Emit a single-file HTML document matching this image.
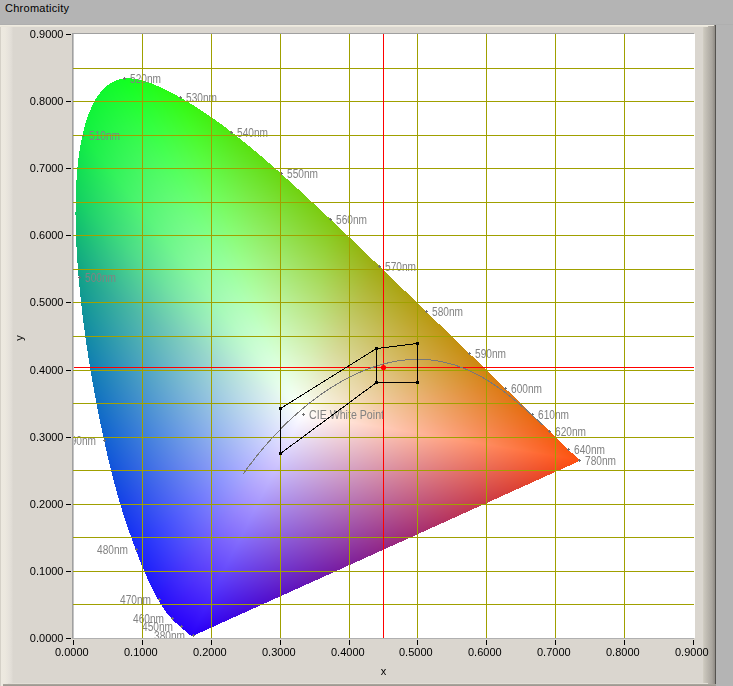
<!DOCTYPE html>
<html><head><meta charset="utf-8">
<style>
html,body{margin:0;padding:0;width:733px;height:686px;overflow:hidden;background:#b4b4b4;}
body{position:relative;font-family:"Liberation Sans",sans-serif;}
#tline{position:absolute;left:0;top:24px;width:733px;height:1px;background:#afafaf;}
#title{position:absolute;left:5px;top:0;font-size:11px;line-height:16px;color:#000;letter-spacing:0.27px;}
#panel{position:absolute;left:0;top:25px;width:716px;height:661px;background:#dad6cf;}
#ltop{position:absolute;left:0;top:0;width:714px;height:1px;background:#efebe0;}#ltop2{position:absolute;left:0;top:1px;width:708px;height:1px;background:#e9e5da;}
#lstrip{position:absolute;left:0;top:2px;width:13px;height:659px;background:linear-gradient(to right,#d5d1c8 0,#d5d1c8 1px,#ede9e0 1px,#ece8df 5px,#e6e2db 9px,#dfdbd4 12px,#dad6cf 13px);}
#rstrip{position:absolute;left:703px;top:0;width:13px;height:661px;background:linear-gradient(to right,#d3cfc4 0,#cbc7bd 1px,#a9a59e 9px,#8e8a84 12px,#55534f 12px,#55534f 13px);}
#bhl{position:absolute;left:8px;top:658px;width:700px;height:1px;background:#e2ded6;}
#bstrip{position:absolute;left:3px;top:659px;width:713px;height:2px;background:linear-gradient(to bottom,#aca8a0,#9a968e);}
#plot{position:absolute;left:74px;top:34px;width:621px;height:604px;background:#fff;}
canvas{position:absolute;left:0;top:0;}
svg{position:absolute;left:0;top:0;}
.wl text{font-size:12px;fill:#828282;}
.ax text{font-size:11px;fill:#000;}
</style></head><body>
<div id="tline"></div><div id="title">Chromaticity</div>
<div id="panel"><div id="rstrip"></div><div id="ltop"></div><div id="ltop2"></div><div id="lstrip"></div><div id="bhl"></div><div id="bstrip"></div></div>
<div id="plot"></div>
<svg id="fb" width="733" height="686" style="position:absolute;left:0;top:0"><defs><linearGradient id="g0" gradientUnits="userSpaceOnUse" x1="302.6" y1="414.3" x2="252.1" y2="647.5"><stop offset="0" stop-color="#fff"/><stop offset="1" stop-color="#2800fa"/></linearGradient><linearGradient id="g1" gradientUnits="userSpaceOnUse" x1="302.6" y1="414.3" x2="219.8" y2="644.4"><stop offset="0" stop-color="#fff"/><stop offset="1" stop-color="#2800fa"/></linearGradient><linearGradient id="g2" gradientUnits="userSpaceOnUse" x1="302.6" y1="414.3" x2="357.6" y2="580.1"><stop offset="0" stop-color="#fff"/><stop offset="1" stop-color="#2800fa"/></linearGradient><linearGradient id="g3" gradientUnits="userSpaceOnUse" x1="302.6" y1="414.3" x2="366.4" y2="557.1"><stop offset="0" stop-color="#fff"/><stop offset="1" stop-color="#2800fa"/></linearGradient><linearGradient id="g4" gradientUnits="userSpaceOnUse" x1="302.6" y1="414.3" x2="326.7" y2="619.0"><stop offset="0" stop-color="#fff"/><stop offset="1" stop-color="#2800fa"/></linearGradient><linearGradient id="g5" gradientUnits="userSpaceOnUse" x1="302.6" y1="414.3" x2="251.0" y2="647.6"><stop offset="0" stop-color="#fff"/><stop offset="1" stop-color="#2800fa"/></linearGradient><linearGradient id="g6" gradientUnits="userSpaceOnUse" x1="302.6" y1="414.3" x2="296.5" y2="637.5"><stop offset="0" stop-color="#fff"/><stop offset="1" stop-color="#2800fa"/></linearGradient><linearGradient id="g7" gradientUnits="userSpaceOnUse" x1="302.6" y1="414.3" x2="367.7" y2="551.9"><stop offset="0" stop-color="#fff"/><stop offset="1" stop-color="#2800fa"/></linearGradient><linearGradient id="g8" gradientUnits="userSpaceOnUse" x1="302.6" y1="414.3" x2="370.7" y2="521.6"><stop offset="0" stop-color="#fff"/><stop offset="1" stop-color="#2800fa"/></linearGradient><linearGradient id="g9" gradientUnits="userSpaceOnUse" x1="302.6" y1="414.3" x2="366.3" y2="557.6"><stop offset="0" stop-color="#fff"/><stop offset="1" stop-color="#2800fa"/></linearGradient><linearGradient id="g10" gradientUnits="userSpaceOnUse" x1="302.6" y1="414.3" x2="336.9" y2="609.4"><stop offset="0" stop-color="#fff"/><stop offset="1" stop-color="#2800fa"/></linearGradient><linearGradient id="g11" gradientUnits="userSpaceOnUse" x1="302.6" y1="414.3" x2="310.1" y2="630.7"><stop offset="0" stop-color="#fff"/><stop offset="1" stop-color="#2800fa"/></linearGradient><linearGradient id="g12" gradientUnits="userSpaceOnUse" x1="302.6" y1="414.3" x2="293.3" y2="639.0"><stop offset="0" stop-color="#fff"/><stop offset="1" stop-color="#2800fa"/></linearGradient><linearGradient id="g13" gradientUnits="userSpaceOnUse" x1="302.6" y1="414.3" x2="281.2" y2="643.1"><stop offset="0" stop-color="#fff"/><stop offset="1" stop-color="#2800fa"/></linearGradient><linearGradient id="g14" gradientUnits="userSpaceOnUse" x1="302.6" y1="414.3" x2="302.0" y2="635.1"><stop offset="0" stop-color="#fff"/><stop offset="1" stop-color="#2800fa"/></linearGradient><linearGradient id="g15" gradientUnits="userSpaceOnUse" x1="302.6" y1="414.3" x2="306.4" y2="632.8"><stop offset="0" stop-color="#fff"/><stop offset="1" stop-color="#2800fa"/></linearGradient><linearGradient id="g16" gradientUnits="userSpaceOnUse" x1="302.6" y1="414.3" x2="282.1" y2="642.9"><stop offset="0" stop-color="#fff"/><stop offset="1" stop-color="#2800fa"/></linearGradient><linearGradient id="g17" gradientUnits="userSpaceOnUse" x1="302.6" y1="414.3" x2="259.2" y2="647.4"><stop offset="0" stop-color="#fff"/><stop offset="1" stop-color="#2800fa"/></linearGradient><linearGradient id="g18" gradientUnits="userSpaceOnUse" x1="302.6" y1="414.3" x2="223.8" y2="645.8"><stop offset="0" stop-color="#fff"/><stop offset="1" stop-color="#2800fa"/></linearGradient><linearGradient id="g19" gradientUnits="userSpaceOnUse" x1="302.6" y1="414.3" x2="196.7" y2="637.2"><stop offset="0" stop-color="#fff"/><stop offset="1" stop-color="#2800fa"/></linearGradient><linearGradient id="g20" gradientUnits="userSpaceOnUse" x1="302.6" y1="414.3" x2="184.7" y2="631.1"><stop offset="0" stop-color="#fff"/><stop offset="1" stop-color="#2800fa"/></linearGradient><linearGradient id="g21" gradientUnits="userSpaceOnUse" x1="302.6" y1="414.3" x2="173.2" y2="623.5"><stop offset="0" stop-color="#fff"/><stop offset="1" stop-color="#2800fa"/></linearGradient><linearGradient id="g22" gradientUnits="userSpaceOnUse" x1="302.6" y1="414.3" x2="162.3" y2="614.5"><stop offset="0" stop-color="#fff"/><stop offset="1" stop-color="#2800fa"/></linearGradient><linearGradient id="g23" gradientUnits="userSpaceOnUse" x1="302.6" y1="414.3" x2="155.9" y2="608.0"><stop offset="0" stop-color="#fff"/><stop offset="1" stop-color="#2800fa"/></linearGradient><linearGradient id="g24" gradientUnits="userSpaceOnUse" x1="302.6" y1="414.3" x2="153.5" y2="605.4"><stop offset="0" stop-color="#fff"/><stop offset="1" stop-color="#2800fa"/></linearGradient><linearGradient id="g25" gradientUnits="userSpaceOnUse" x1="302.6" y1="414.3" x2="152.9" y2="604.7"><stop offset="0" stop-color="#fff"/><stop offset="1" stop-color="#2800fa"/></linearGradient><linearGradient id="g26" gradientUnits="userSpaceOnUse" x1="302.6" y1="414.3" x2="150.1" y2="601.4"><stop offset="0" stop-color="#fff"/><stop offset="1" stop-color="#2800fa"/></linearGradient><linearGradient id="g27" gradientUnits="userSpaceOnUse" x1="302.6" y1="414.3" x2="145.2" y2="595.0"><stop offset="0" stop-color="#fff"/><stop offset="1" stop-color="#2800fa"/></linearGradient><linearGradient id="g28" gradientUnits="userSpaceOnUse" x1="302.6" y1="414.3" x2="142.1" y2="590.5"><stop offset="0" stop-color="#fff"/><stop offset="1" stop-color="#2800fa"/></linearGradient><linearGradient id="g29" gradientUnits="userSpaceOnUse" x1="302.6" y1="414.3" x2="142.7" y2="591.4"><stop offset="0" stop-color="#fff"/><stop offset="1" stop-color="#2800fa"/></linearGradient><linearGradient id="g30" gradientUnits="userSpaceOnUse" x1="302.6" y1="414.3" x2="144.9" y2="594.5"><stop offset="0" stop-color="#fff"/><stop offset="1" stop-color="#2800fa"/></linearGradient><linearGradient id="g31" gradientUnits="userSpaceOnUse" x1="302.6" y1="414.3" x2="146.1" y2="596.2"><stop offset="0" stop-color="#fff"/><stop offset="1" stop-color="#2801fa"/></linearGradient><linearGradient id="g32" gradientUnits="userSpaceOnUse" x1="302.6" y1="414.3" x2="146.6" y2="596.7"><stop offset="0" stop-color="#fff"/><stop offset="1" stop-color="#2801fa"/></linearGradient><linearGradient id="g33" gradientUnits="userSpaceOnUse" x1="302.6" y1="414.3" x2="146.6" y2="596.8"><stop offset="0" stop-color="#fff"/><stop offset="1" stop-color="#2801fa"/></linearGradient><linearGradient id="g34" gradientUnits="userSpaceOnUse" x1="302.6" y1="414.3" x2="146.9" y2="597.1"><stop offset="0" stop-color="#fff"/><stop offset="1" stop-color="#2802fa"/></linearGradient><linearGradient id="g35" gradientUnits="userSpaceOnUse" x1="302.6" y1="414.3" x2="146.9" y2="597.1"><stop offset="0" stop-color="#fff"/><stop offset="1" stop-color="#2802fa"/></linearGradient><linearGradient id="g36" gradientUnits="userSpaceOnUse" x1="302.6" y1="414.3" x2="145.4" y2="595.3"><stop offset="0" stop-color="#fff"/><stop offset="1" stop-color="#2803fa"/></linearGradient><linearGradient id="g37" gradientUnits="userSpaceOnUse" x1="302.6" y1="414.3" x2="142.7" y2="591.8"><stop offset="0" stop-color="#fff"/><stop offset="1" stop-color="#2803fa"/></linearGradient><linearGradient id="g38" gradientUnits="userSpaceOnUse" x1="302.6" y1="414.3" x2="139.2" y2="586.9"><stop offset="0" stop-color="#fff"/><stop offset="1" stop-color="#2803fa"/></linearGradient><linearGradient id="g39" gradientUnits="userSpaceOnUse" x1="302.6" y1="414.3" x2="135.1" y2="580.7"><stop offset="0" stop-color="#fff"/><stop offset="1" stop-color="#2804fa"/></linearGradient><linearGradient id="g40" gradientUnits="userSpaceOnUse" x1="302.6" y1="414.3" x2="130.8" y2="573.3"><stop offset="0" stop-color="#fff"/><stop offset="1" stop-color="#2805fa"/></linearGradient><linearGradient id="g41" gradientUnits="userSpaceOnUse" x1="302.6" y1="414.3" x2="125.7" y2="563.1"><stop offset="0" stop-color="#fff"/><stop offset="1" stop-color="#2707fa"/></linearGradient><linearGradient id="g42" gradientUnits="userSpaceOnUse" x1="302.6" y1="414.3" x2="120.8" y2="550.3"><stop offset="0" stop-color="#fff"/><stop offset="1" stop-color="#2609fa"/></linearGradient><linearGradient id="g43" gradientUnits="userSpaceOnUse" x1="302.6" y1="414.3" x2="117.5" y2="538.7"><stop offset="0" stop-color="#fff"/><stop offset="1" stop-color="#250bfa"/></linearGradient><linearGradient id="g44" gradientUnits="userSpaceOnUse" x1="302.6" y1="414.3" x2="115.4" y2="528.6"><stop offset="0" stop-color="#fff"/><stop offset="1" stop-color="#240dfa"/></linearGradient><linearGradient id="g45" gradientUnits="userSpaceOnUse" x1="302.6" y1="414.3" x2="114.0" y2="518.9"><stop offset="0" stop-color="#fff"/><stop offset="1" stop-color="#2311fa"/></linearGradient><linearGradient id="g46" gradientUnits="userSpaceOnUse" x1="302.6" y1="414.3" x2="113.1" y2="509.8"><stop offset="0" stop-color="#fff"/><stop offset="1" stop-color="#2016fa"/></linearGradient><linearGradient id="g47" gradientUnits="userSpaceOnUse" x1="302.6" y1="414.3" x2="112.6" y2="501.4"><stop offset="0" stop-color="#fff"/><stop offset="1" stop-color="#1e1bfa"/></linearGradient><linearGradient id="g48" gradientUnits="userSpaceOnUse" x1="302.6" y1="414.3" x2="112.4" y2="493.8"><stop offset="0" stop-color="#fff"/><stop offset="1" stop-color="#1c20fa"/></linearGradient><linearGradient id="g49" gradientUnits="userSpaceOnUse" x1="302.6" y1="414.3" x2="112.3" y2="488.3"><stop offset="0" stop-color="#fff"/><stop offset="1" stop-color="#1925fa"/></linearGradient><linearGradient id="g50" gradientUnits="userSpaceOnUse" x1="302.6" y1="414.3" x2="112.1" y2="484.0"><stop offset="0" stop-color="#fff"/><stop offset="1" stop-color="#172df6"/></linearGradient><linearGradient id="g51" gradientUnits="userSpaceOnUse" x1="302.6" y1="414.3" x2="111.7" y2="478.6"><stop offset="0" stop-color="#fff"/><stop offset="1" stop-color="#1636ef"/></linearGradient><linearGradient id="g52" gradientUnits="userSpaceOnUse" x1="302.6" y1="414.3" x2="111.0" y2="471.6"><stop offset="0" stop-color="#fff"/><stop offset="1" stop-color="#1441e8"/></linearGradient><linearGradient id="g53" gradientUnits="userSpaceOnUse" x1="302.6" y1="414.3" x2="109.9" y2="464.7"><stop offset="0" stop-color="#fff"/><stop offset="1" stop-color="#124ddf"/></linearGradient><linearGradient id="g54" gradientUnits="userSpaceOnUse" x1="302.6" y1="414.3" x2="108.8" y2="459.4"><stop offset="0" stop-color="#fff"/><stop offset="1" stop-color="#115ad6"/></linearGradient><linearGradient id="g55" gradientUnits="userSpaceOnUse" x1="302.6" y1="414.3" x2="107.5" y2="455.3"><stop offset="0" stop-color="#fff"/><stop offset="1" stop-color="#1066cb"/></linearGradient><linearGradient id="g56" gradientUnits="userSpaceOnUse" x1="302.6" y1="414.3" x2="105.6" y2="451.0"><stop offset="0" stop-color="#fff"/><stop offset="1" stop-color="#1073be"/></linearGradient><linearGradient id="g57" gradientUnits="userSpaceOnUse" x1="302.6" y1="414.3" x2="103.0" y2="446.3"><stop offset="0" stop-color="#fff"/><stop offset="1" stop-color="#1080af"/></linearGradient><linearGradient id="g58" gradientUnits="userSpaceOnUse" x1="302.6" y1="414.3" x2="99.5" y2="441.3"><stop offset="0" stop-color="#fff"/><stop offset="1" stop-color="#108da0"/></linearGradient><linearGradient id="g59" gradientUnits="userSpaceOnUse" x1="302.6" y1="414.3" x2="94.9" y2="435.6"><stop offset="0" stop-color="#fff"/><stop offset="1" stop-color="#109a90"/></linearGradient><linearGradient id="g60" gradientUnits="userSpaceOnUse" x1="302.6" y1="414.3" x2="89.2" y2="429.1"><stop offset="0" stop-color="#fff"/><stop offset="1" stop-color="#10aa80"/></linearGradient><linearGradient id="g61" gradientUnits="userSpaceOnUse" x1="302.6" y1="414.3" x2="81.2" y2="420.4"><stop offset="0" stop-color="#fff"/><stop offset="1" stop-color="#10bd70"/></linearGradient><linearGradient id="g62" gradientUnits="userSpaceOnUse" x1="302.6" y1="414.3" x2="70.8" y2="408.7"><stop offset="0" stop-color="#fff"/><stop offset="1" stop-color="#10ce61"/></linearGradient><linearGradient id="g63" gradientUnits="userSpaceOnUse" x1="302.6" y1="414.3" x2="58.1" y2="393.0"><stop offset="0" stop-color="#fff"/><stop offset="1" stop-color="#10dd53"/></linearGradient><linearGradient id="g64" gradientUnits="userSpaceOnUse" x1="302.6" y1="414.3" x2="41.9" y2="369.1"><stop offset="0" stop-color="#fff"/><stop offset="1" stop-color="#10ea46"/></linearGradient><linearGradient id="g65" gradientUnits="userSpaceOnUse" x1="302.6" y1="414.3" x2="24.6" y2="333.1"><stop offset="0" stop-color="#fff"/><stop offset="1" stop-color="#10f23d"/></linearGradient><linearGradient id="g66" gradientUnits="userSpaceOnUse" x1="302.6" y1="414.3" x2="11.9" y2="278.8"><stop offset="0" stop-color="#fff"/><stop offset="1" stop-color="#10f436"/></linearGradient><linearGradient id="g67" gradientUnits="userSpaceOnUse" x1="302.6" y1="414.3" x2="21.1" y2="194.7"><stop offset="0" stop-color="#fff"/><stop offset="1" stop-color="#10f830"/></linearGradient><linearGradient id="g68" gradientUnits="userSpaceOnUse" x1="302.6" y1="414.3" x2="84.5" y2="101.9"><stop offset="0" stop-color="#fff"/><stop offset="1" stop-color="#10fa2a"/></linearGradient><linearGradient id="g69" gradientUnits="userSpaceOnUse" x1="302.6" y1="414.3" x2="200.8" y2="56.6"><stop offset="0" stop-color="#fff"/><stop offset="1" stop-color="#10fe23"/></linearGradient><linearGradient id="g70" gradientUnits="userSpaceOnUse" x1="302.6" y1="414.3" x2="313.2" y2="84.5"><stop offset="0" stop-color="#fff"/><stop offset="1" stop-color="#13fe1e"/></linearGradient><linearGradient id="g71" gradientUnits="userSpaceOnUse" x1="302.6" y1="414.3" x2="371.5" y2="137.7"><stop offset="0" stop-color="#fff"/><stop offset="1" stop-color="#1afe1b"/></linearGradient><linearGradient id="g72" gradientUnits="userSpaceOnUse" x1="302.6" y1="414.3" x2="393.7" y2="176.2"><stop offset="0" stop-color="#fff"/><stop offset="1" stop-color="#20fc18"/></linearGradient><linearGradient id="g73" gradientUnits="userSpaceOnUse" x1="302.6" y1="414.3" x2="403.3" y2="203.0"><stop offset="0" stop-color="#fff"/><stop offset="1" stop-color="#26fc15"/></linearGradient><linearGradient id="g74" gradientUnits="userSpaceOnUse" x1="302.6" y1="414.3" x2="407.5" y2="220.7"><stop offset="0" stop-color="#fff"/><stop offset="1" stop-color="#2dfa12"/></linearGradient><linearGradient id="g75" gradientUnits="userSpaceOnUse" x1="302.6" y1="414.3" x2="409.5" y2="232.1"><stop offset="0" stop-color="#fff"/><stop offset="1" stop-color="#33f810"/></linearGradient><linearGradient id="g76" gradientUnits="userSpaceOnUse" x1="302.6" y1="414.3" x2="410.9" y2="242.3"><stop offset="0" stop-color="#fff"/><stop offset="1" stop-color="#3af410"/></linearGradient><linearGradient id="g77" gradientUnits="userSpaceOnUse" x1="302.6" y1="414.3" x2="411.8" y2="252.4"><stop offset="0" stop-color="#fff"/><stop offset="1" stop-color="#40f010"/></linearGradient><linearGradient id="g78" gradientUnits="userSpaceOnUse" x1="302.6" y1="414.3" x2="412.3" y2="260.9"><stop offset="0" stop-color="#fff"/><stop offset="1" stop-color="#46ec10"/></linearGradient><linearGradient id="g79" gradientUnits="userSpaceOnUse" x1="302.6" y1="414.3" x2="412.5" y2="268.2"><stop offset="0" stop-color="#fff"/><stop offset="1" stop-color="#4de810"/></linearGradient><linearGradient id="g80" gradientUnits="userSpaceOnUse" x1="302.6" y1="414.3" x2="412.6" y2="274.4"><stop offset="0" stop-color="#fff"/><stop offset="1" stop-color="#52e410"/></linearGradient><linearGradient id="g81" gradientUnits="userSpaceOnUse" x1="302.6" y1="414.3" x2="412.6" y2="279.6"><stop offset="0" stop-color="#fff"/><stop offset="1" stop-color="#57e210"/></linearGradient><linearGradient id="g82" gradientUnits="userSpaceOnUse" x1="302.6" y1="414.3" x2="412.6" y2="283.9"><stop offset="0" stop-color="#fff"/><stop offset="1" stop-color="#5cde10"/></linearGradient><linearGradient id="g83" gradientUnits="userSpaceOnUse" x1="302.6" y1="414.3" x2="412.6" y2="287.4"><stop offset="0" stop-color="#fff"/><stop offset="1" stop-color="#61dc10"/></linearGradient><linearGradient id="g84" gradientUnits="userSpaceOnUse" x1="302.6" y1="414.3" x2="412.6" y2="290.1"><stop offset="0" stop-color="#fff"/><stop offset="1" stop-color="#66d810"/></linearGradient><linearGradient id="g85" gradientUnits="userSpaceOnUse" x1="302.6" y1="414.3" x2="412.6" y2="292.3"><stop offset="0" stop-color="#fff"/><stop offset="1" stop-color="#6ad610"/></linearGradient><linearGradient id="g86" gradientUnits="userSpaceOnUse" x1="302.6" y1="414.3" x2="412.7" y2="294.0"><stop offset="0" stop-color="#fff"/><stop offset="1" stop-color="#6fd210"/></linearGradient><linearGradient id="g87" gradientUnits="userSpaceOnUse" x1="302.6" y1="414.3" x2="412.8" y2="295.4"><stop offset="0" stop-color="#fff"/><stop offset="1" stop-color="#74d010"/></linearGradient><linearGradient id="g88" gradientUnits="userSpaceOnUse" x1="302.6" y1="414.3" x2="412.9" y2="296.5"><stop offset="0" stop-color="#fff"/><stop offset="1" stop-color="#79cc10"/></linearGradient><linearGradient id="g89" gradientUnits="userSpaceOnUse" x1="302.6" y1="414.3" x2="413.1" y2="297.3"><stop offset="0" stop-color="#fff"/><stop offset="1" stop-color="#7eca10"/></linearGradient><linearGradient id="g90" gradientUnits="userSpaceOnUse" x1="302.6" y1="414.3" x2="413.2" y2="297.8"><stop offset="0" stop-color="#fff"/><stop offset="1" stop-color="#83c510"/></linearGradient><linearGradient id="g91" gradientUnits="userSpaceOnUse" x1="302.6" y1="414.3" x2="413.3" y2="298.3"><stop offset="0" stop-color="#fff"/><stop offset="1" stop-color="#8abf10"/></linearGradient><linearGradient id="g92" gradientUnits="userSpaceOnUse" x1="302.6" y1="414.3" x2="413.4" y2="298.7"><stop offset="0" stop-color="#fff"/><stop offset="1" stop-color="#90b910"/></linearGradient><linearGradient id="g93" gradientUnits="userSpaceOnUse" x1="302.6" y1="414.3" x2="413.5" y2="299.0"><stop offset="0" stop-color="#fff"/><stop offset="1" stop-color="#96b310"/></linearGradient><linearGradient id="g94" gradientUnits="userSpaceOnUse" x1="302.6" y1="414.3" x2="413.6" y2="299.2"><stop offset="0" stop-color="#fff"/><stop offset="1" stop-color="#9dad10"/></linearGradient><linearGradient id="g95" gradientUnits="userSpaceOnUse" x1="302.6" y1="414.3" x2="413.7" y2="299.4"><stop offset="0" stop-color="#fff"/><stop offset="1" stop-color="#a2a810"/></linearGradient><linearGradient id="g96" gradientUnits="userSpaceOnUse" x1="302.6" y1="414.3" x2="413.8" y2="299.6"><stop offset="0" stop-color="#fff"/><stop offset="1" stop-color="#a7a610"/></linearGradient><linearGradient id="g97" gradientUnits="userSpaceOnUse" x1="302.6" y1="414.3" x2="413.9" y2="299.6"><stop offset="0" stop-color="#fff"/><stop offset="1" stop-color="#aba210"/></linearGradient><linearGradient id="g98" gradientUnits="userSpaceOnUse" x1="302.6" y1="414.3" x2="414.0" y2="299.7"><stop offset="0" stop-color="#fff"/><stop offset="1" stop-color="#afa010"/></linearGradient><linearGradient id="g99" gradientUnits="userSpaceOnUse" x1="302.6" y1="414.3" x2="414.0" y2="299.7"><stop offset="0" stop-color="#fff"/><stop offset="1" stop-color="#b49c10"/></linearGradient><linearGradient id="g100" gradientUnits="userSpaceOnUse" x1="302.6" y1="414.3" x2="413.9" y2="299.6"><stop offset="0" stop-color="#fff"/><stop offset="1" stop-color="#b89a10"/></linearGradient><linearGradient id="g101" gradientUnits="userSpaceOnUse" x1="302.6" y1="414.3" x2="413.8" y2="299.6"><stop offset="0" stop-color="#fff"/><stop offset="1" stop-color="#bb9610"/></linearGradient><linearGradient id="g102" gradientUnits="userSpaceOnUse" x1="302.6" y1="414.3" x2="413.8" y2="299.6"><stop offset="0" stop-color="#fff"/><stop offset="1" stop-color="#bf9410"/></linearGradient><linearGradient id="g103" gradientUnits="userSpaceOnUse" x1="302.6" y1="414.3" x2="413.7" y2="299.6"><stop offset="0" stop-color="#fff"/><stop offset="1" stop-color="#c39010"/></linearGradient><linearGradient id="g104" gradientUnits="userSpaceOnUse" x1="302.6" y1="414.3" x2="413.8" y2="299.6"><stop offset="0" stop-color="#fff"/><stop offset="1" stop-color="#c68e10"/></linearGradient><linearGradient id="g105" gradientUnits="userSpaceOnUse" x1="302.6" y1="414.3" x2="414.1" y2="299.7"><stop offset="0" stop-color="#fff"/><stop offset="1" stop-color="#ca8a10"/></linearGradient><linearGradient id="g106" gradientUnits="userSpaceOnUse" x1="302.6" y1="414.3" x2="414.2" y2="299.7"><stop offset="0" stop-color="#fff"/><stop offset="1" stop-color="#ce8610"/></linearGradient><linearGradient id="g107" gradientUnits="userSpaceOnUse" x1="302.6" y1="414.3" x2="414.0" y2="299.7"><stop offset="0" stop-color="#fff"/><stop offset="1" stop-color="#d28210"/></linearGradient><linearGradient id="g108" gradientUnits="userSpaceOnUse" x1="302.6" y1="414.3" x2="413.9" y2="299.6"><stop offset="0" stop-color="#fff"/><stop offset="1" stop-color="#d67e10"/></linearGradient><linearGradient id="g109" gradientUnits="userSpaceOnUse" x1="302.6" y1="414.3" x2="413.8" y2="299.6"><stop offset="0" stop-color="#fff"/><stop offset="1" stop-color="#da7a10"/></linearGradient><linearGradient id="g110" gradientUnits="userSpaceOnUse" x1="302.6" y1="414.3" x2="413.9" y2="299.6"><stop offset="0" stop-color="#fff"/><stop offset="1" stop-color="#dd7710"/></linearGradient><linearGradient id="g111" gradientUnits="userSpaceOnUse" x1="302.6" y1="414.3" x2="413.8" y2="299.6"><stop offset="0" stop-color="#fff"/><stop offset="1" stop-color="#e07410"/></linearGradient><linearGradient id="g112" gradientUnits="userSpaceOnUse" x1="302.6" y1="414.3" x2="413.6" y2="299.6"><stop offset="0" stop-color="#fff"/><stop offset="1" stop-color="#e27110"/></linearGradient><linearGradient id="g113" gradientUnits="userSpaceOnUse" x1="302.6" y1="414.3" x2="413.4" y2="299.6"><stop offset="0" stop-color="#fff"/><stop offset="1" stop-color="#e46e10"/></linearGradient><linearGradient id="g114" gradientUnits="userSpaceOnUse" x1="302.6" y1="414.3" x2="413.4" y2="299.6"><stop offset="0" stop-color="#fff"/><stop offset="1" stop-color="#e76b10"/></linearGradient><linearGradient id="g115" gradientUnits="userSpaceOnUse" x1="302.6" y1="414.3" x2="413.8" y2="299.6"><stop offset="0" stop-color="#fff"/><stop offset="1" stop-color="#e96910"/></linearGradient><linearGradient id="g116" gradientUnits="userSpaceOnUse" x1="302.6" y1="414.3" x2="414.1" y2="299.6"><stop offset="0" stop-color="#fff"/><stop offset="1" stop-color="#ea6710"/></linearGradient><linearGradient id="g117" gradientUnits="userSpaceOnUse" x1="302.6" y1="414.3" x2="414.2" y2="299.6"><stop offset="0" stop-color="#fff"/><stop offset="1" stop-color="#ec6510"/></linearGradient><linearGradient id="g118" gradientUnits="userSpaceOnUse" x1="302.6" y1="414.3" x2="414.2" y2="299.6"><stop offset="0" stop-color="#fff"/><stop offset="1" stop-color="#ee6310"/></linearGradient><linearGradient id="g119" gradientUnits="userSpaceOnUse" x1="302.6" y1="414.3" x2="414.1" y2="299.6"><stop offset="0" stop-color="#fff"/><stop offset="1" stop-color="#ef6110"/></linearGradient><linearGradient id="g120" gradientUnits="userSpaceOnUse" x1="302.6" y1="414.3" x2="413.7" y2="299.6"><stop offset="0" stop-color="#fff"/><stop offset="1" stop-color="#f05f10"/></linearGradient><linearGradient id="g121" gradientUnits="userSpaceOnUse" x1="302.6" y1="414.3" x2="413.4" y2="299.7"><stop offset="0" stop-color="#fff"/><stop offset="1" stop-color="#f25e10"/></linearGradient><linearGradient id="g122" gradientUnits="userSpaceOnUse" x1="302.6" y1="414.3" x2="413.5" y2="299.7"><stop offset="0" stop-color="#fff"/><stop offset="1" stop-color="#f25d10"/></linearGradient><linearGradient id="g123" gradientUnits="userSpaceOnUse" x1="302.6" y1="414.3" x2="413.7" y2="299.6"><stop offset="0" stop-color="#fff"/><stop offset="1" stop-color="#f45c10"/></linearGradient><linearGradient id="g124" gradientUnits="userSpaceOnUse" x1="302.6" y1="414.3" x2="413.9" y2="299.6"><stop offset="0" stop-color="#fff"/><stop offset="1" stop-color="#f45b10"/></linearGradient><linearGradient id="g125" gradientUnits="userSpaceOnUse" x1="302.6" y1="414.3" x2="414.0" y2="299.6"><stop offset="0" stop-color="#fff"/><stop offset="1" stop-color="#f65a10"/></linearGradient><linearGradient id="g126" gradientUnits="userSpaceOnUse" x1="302.6" y1="414.3" x2="414.1" y2="299.6"><stop offset="0" stop-color="#fff"/><stop offset="1" stop-color="#f65910"/></linearGradient><linearGradient id="g127" gradientUnits="userSpaceOnUse" x1="302.6" y1="414.3" x2="414.2" y2="299.6"><stop offset="0" stop-color="#fff"/><stop offset="1" stop-color="#f85810"/></linearGradient><linearGradient id="g128" gradientUnits="userSpaceOnUse" x1="302.6" y1="414.3" x2="414.2" y2="299.6"><stop offset="0" stop-color="#fff"/><stop offset="1" stop-color="#f85710"/></linearGradient><linearGradient id="g129" gradientUnits="userSpaceOnUse" x1="302.6" y1="414.3" x2="414.2" y2="299.6"><stop offset="0" stop-color="#fff"/><stop offset="1" stop-color="#fa5610"/></linearGradient><linearGradient id="g130" gradientUnits="userSpaceOnUse" x1="302.6" y1="414.3" x2="414.1" y2="299.6"><stop offset="0" stop-color="#fff"/><stop offset="1" stop-color="#fa5510"/></linearGradient><linearGradient id="g131" gradientUnits="userSpaceOnUse" x1="302.6" y1="414.3" x2="414.0" y2="299.6"><stop offset="0" stop-color="#fff"/><stop offset="1" stop-color="#fa5510"/></linearGradient><linearGradient id="g132" gradientUnits="userSpaceOnUse" x1="302.6" y1="414.3" x2="413.8" y2="299.6"><stop offset="0" stop-color="#fff"/><stop offset="1" stop-color="#fa5510"/></linearGradient><linearGradient id="g133" gradientUnits="userSpaceOnUse" x1="302.6" y1="414.3" x2="413.5" y2="299.7"><stop offset="0" stop-color="#fff"/><stop offset="1" stop-color="#fb5410"/></linearGradient><linearGradient id="g134" gradientUnits="userSpaceOnUse" x1="302.6" y1="414.3" x2="413.5" y2="299.7"><stop offset="0" stop-color="#fff"/><stop offset="1" stop-color="#fb5410"/></linearGradient><linearGradient id="g135" gradientUnits="userSpaceOnUse" x1="302.6" y1="414.3" x2="414.4" y2="299.5"><stop offset="0" stop-color="#fff"/><stop offset="1" stop-color="#fb5410"/></linearGradient><linearGradient id="g136" gradientUnits="userSpaceOnUse" x1="302.6" y1="414.3" x2="414.4" y2="299.5"><stop offset="0" stop-color="#fff"/><stop offset="1" stop-color="#fb5410"/></linearGradient><linearGradient id="g137" gradientUnits="userSpaceOnUse" x1="302.6" y1="414.3" x2="414.4" y2="299.5"><stop offset="0" stop-color="#fff"/><stop offset="1" stop-color="#fb5410"/></linearGradient><linearGradient id="g138" gradientUnits="userSpaceOnUse" x1="302.6" y1="414.3" x2="414.4" y2="299.5"><stop offset="0" stop-color="#fff"/><stop offset="1" stop-color="#fb5410"/></linearGradient><linearGradient id="g139" gradientUnits="userSpaceOnUse" x1="302.6" y1="414.3" x2="414.4" y2="299.5"><stop offset="0" stop-color="#fff"/><stop offset="1" stop-color="#fc5310"/></linearGradient><linearGradient id="g140" gradientUnits="userSpaceOnUse" x1="302.6" y1="414.3" x2="414.4" y2="299.5"><stop offset="0" stop-color="#fff"/><stop offset="1" stop-color="#fc5310"/></linearGradient><linearGradient id="g141" gradientUnits="userSpaceOnUse" x1="302.6" y1="414.3" x2="414.4" y2="299.5"><stop offset="0" stop-color="#fff"/><stop offset="1" stop-color="#fc5310"/></linearGradient><linearGradient id="g142" gradientUnits="userSpaceOnUse" x1="302.6" y1="414.3" x2="414.4" y2="299.5"><stop offset="0" stop-color="#fff"/><stop offset="1" stop-color="#fc5310"/></linearGradient><linearGradient id="g143" gradientUnits="userSpaceOnUse" x1="302.6" y1="414.3" x2="414.4" y2="299.5"><stop offset="0" stop-color="#fff"/><stop offset="1" stop-color="#fc5310"/></linearGradient><linearGradient id="g144" gradientUnits="userSpaceOnUse" x1="302.6" y1="414.3" x2="414.4" y2="299.5"><stop offset="0" stop-color="#fff"/><stop offset="1" stop-color="#fc5310"/></linearGradient><linearGradient id="g145" gradientUnits="userSpaceOnUse" x1="302.6" y1="414.3" x2="414.4" y2="299.5"><stop offset="0" stop-color="#fff"/><stop offset="1" stop-color="#fd5210"/></linearGradient><linearGradient id="g146" gradientUnits="userSpaceOnUse" x1="302.6" y1="414.3" x2="414.4" y2="299.5"><stop offset="0" stop-color="#fff"/><stop offset="1" stop-color="#fd5210"/></linearGradient><linearGradient id="g147" gradientUnits="userSpaceOnUse" x1="302.6" y1="414.3" x2="414.4" y2="299.5"><stop offset="0" stop-color="#fff"/><stop offset="1" stop-color="#fd5210"/></linearGradient><linearGradient id="g148" gradientUnits="userSpaceOnUse" x1="302.6" y1="414.3" x2="414.4" y2="299.5"><stop offset="0" stop-color="#fff"/><stop offset="1" stop-color="#fd5210"/></linearGradient><linearGradient id="g149" gradientUnits="userSpaceOnUse" x1="302.6" y1="414.3" x2="414.4" y2="299.5"><stop offset="0" stop-color="#fff"/><stop offset="1" stop-color="#fd5210"/></linearGradient><linearGradient id="g150" gradientUnits="userSpaceOnUse" x1="302.6" y1="414.3" x2="414.4" y2="299.5"><stop offset="0" stop-color="#fff"/><stop offset="1" stop-color="#fd5210"/></linearGradient><linearGradient id="g151" gradientUnits="userSpaceOnUse" x1="302.6" y1="414.3" x2="414.4" y2="299.5"><stop offset="0" stop-color="#fff"/><stop offset="1" stop-color="#fe5110"/></linearGradient><linearGradient id="g152" gradientUnits="userSpaceOnUse" x1="302.6" y1="414.3" x2="414.4" y2="299.5"><stop offset="0" stop-color="#fff"/><stop offset="1" stop-color="#fe5110"/></linearGradient><linearGradient id="g153" gradientUnits="userSpaceOnUse" x1="302.6" y1="414.3" x2="414.4" y2="299.5"><stop offset="0" stop-color="#fff"/><stop offset="1" stop-color="#fe5110"/></linearGradient><linearGradient id="g154" gradientUnits="userSpaceOnUse" x1="302.6" y1="414.3" x2="414.4" y2="299.5"><stop offset="0" stop-color="#fff"/><stop offset="1" stop-color="#fe5110"/></linearGradient><linearGradient id="g155" gradientUnits="userSpaceOnUse" x1="302.6" y1="414.3" x2="414.4" y2="299.5"><stop offset="0" stop-color="#fff"/><stop offset="1" stop-color="#fe5110"/></linearGradient><linearGradient id="g156" gradientUnits="userSpaceOnUse" x1="302.6" y1="414.3" x2="414.4" y2="299.5"><stop offset="0" stop-color="#fff"/><stop offset="1" stop-color="#fe5110"/></linearGradient><linearGradient id="g157" gradientUnits="userSpaceOnUse" x1="302.6" y1="414.3" x2="414.4" y2="299.5"><stop offset="0" stop-color="#fff"/><stop offset="1" stop-color="#ff5010"/></linearGradient><linearGradient id="g158" gradientUnits="userSpaceOnUse" x1="302.6" y1="414.3" x2="414.4" y2="299.5"><stop offset="0" stop-color="#fff"/><stop offset="1" stop-color="#ff5010"/></linearGradient><linearGradient id="g159" gradientUnits="userSpaceOnUse" x1="302.6" y1="414.3" x2="414.4" y2="299.5"><stop offset="0" stop-color="#fff"/><stop offset="1" stop-color="#ff5010"/></linearGradient><linearGradient id="g160" gradientUnits="userSpaceOnUse" x1="302.6" y1="414.3" x2="366.8" y2="556.0"><stop offset="0" stop-color="#fff"/><stop offset="1" stop-color="#fb4e15"/></linearGradient><linearGradient id="g161" gradientUnits="userSpaceOnUse" x1="302.6" y1="414.3" x2="366.8" y2="556.0"><stop offset="0" stop-color="#fff"/><stop offset="1" stop-color="#f24b1f"/></linearGradient><linearGradient id="g162" gradientUnits="userSpaceOnUse" x1="302.6" y1="414.3" x2="366.8" y2="556.0"><stop offset="0" stop-color="#fff"/><stop offset="1" stop-color="#e94828"/></linearGradient><linearGradient id="g163" gradientUnits="userSpaceOnUse" x1="302.6" y1="414.3" x2="366.8" y2="556.0"><stop offset="0" stop-color="#fff"/><stop offset="1" stop-color="#e04432"/></linearGradient><linearGradient id="g164" gradientUnits="userSpaceOnUse" x1="302.6" y1="414.3" x2="366.8" y2="556.0"><stop offset="0" stop-color="#fff"/><stop offset="1" stop-color="#d7413c"/></linearGradient><linearGradient id="g165" gradientUnits="userSpaceOnUse" x1="302.6" y1="414.3" x2="366.8" y2="556.0"><stop offset="0" stop-color="#fff"/><stop offset="1" stop-color="#ce3e46"/></linearGradient><linearGradient id="g166" gradientUnits="userSpaceOnUse" x1="302.6" y1="414.3" x2="366.8" y2="556.0"><stop offset="0" stop-color="#fff"/><stop offset="1" stop-color="#c53a4f"/></linearGradient><linearGradient id="g167" gradientUnits="userSpaceOnUse" x1="302.6" y1="414.3" x2="366.8" y2="556.0"><stop offset="0" stop-color="#fff"/><stop offset="1" stop-color="#bc3759"/></linearGradient><linearGradient id="g168" gradientUnits="userSpaceOnUse" x1="302.6" y1="414.3" x2="366.8" y2="556.0"><stop offset="0" stop-color="#fff"/><stop offset="1" stop-color="#b33463"/></linearGradient><linearGradient id="g169" gradientUnits="userSpaceOnUse" x1="302.6" y1="414.3" x2="366.8" y2="556.0"><stop offset="0" stop-color="#fff"/><stop offset="1" stop-color="#aa306d"/></linearGradient><linearGradient id="g170" gradientUnits="userSpaceOnUse" x1="302.6" y1="414.3" x2="366.8" y2="556.0"><stop offset="0" stop-color="#fff"/><stop offset="1" stop-color="#a12d76"/></linearGradient><linearGradient id="g171" gradientUnits="userSpaceOnUse" x1="302.6" y1="414.3" x2="366.8" y2="556.0"><stop offset="0" stop-color="#fff"/><stop offset="1" stop-color="#982a80"/></linearGradient><linearGradient id="g172" gradientUnits="userSpaceOnUse" x1="302.6" y1="414.3" x2="366.8" y2="556.0"><stop offset="0" stop-color="#fff"/><stop offset="1" stop-color="#8f268a"/></linearGradient><linearGradient id="g173" gradientUnits="userSpaceOnUse" x1="302.6" y1="414.3" x2="366.8" y2="556.0"><stop offset="0" stop-color="#fff"/><stop offset="1" stop-color="#862394"/></linearGradient><linearGradient id="g174" gradientUnits="userSpaceOnUse" x1="302.6" y1="414.3" x2="366.8" y2="556.0"><stop offset="0" stop-color="#fff"/><stop offset="1" stop-color="#7d209d"/></linearGradient><linearGradient id="g175" gradientUnits="userSpaceOnUse" x1="302.6" y1="414.3" x2="366.8" y2="556.0"><stop offset="0" stop-color="#fff"/><stop offset="1" stop-color="#741ca7"/></linearGradient><linearGradient id="g176" gradientUnits="userSpaceOnUse" x1="302.6" y1="414.3" x2="366.8" y2="556.0"><stop offset="0" stop-color="#fff"/><stop offset="1" stop-color="#6b19b1"/></linearGradient><linearGradient id="g177" gradientUnits="userSpaceOnUse" x1="302.6" y1="414.3" x2="366.8" y2="556.0"><stop offset="0" stop-color="#fff"/><stop offset="1" stop-color="#6216bb"/></linearGradient><linearGradient id="g178" gradientUnits="userSpaceOnUse" x1="302.6" y1="414.3" x2="366.8" y2="556.0"><stop offset="0" stop-color="#fff"/><stop offset="1" stop-color="#5912c4"/></linearGradient><linearGradient id="g179" gradientUnits="userSpaceOnUse" x1="302.6" y1="414.3" x2="366.8" y2="556.0"><stop offset="0" stop-color="#fff"/><stop offset="1" stop-color="#500fce"/></linearGradient><linearGradient id="g180" gradientUnits="userSpaceOnUse" x1="302.6" y1="414.3" x2="366.8" y2="556.0"><stop offset="0" stop-color="#fff"/><stop offset="1" stop-color="#470cd8"/></linearGradient><linearGradient id="g181" gradientUnits="userSpaceOnUse" x1="302.6" y1="414.3" x2="366.8" y2="556.0"><stop offset="0" stop-color="#fff"/><stop offset="1" stop-color="#3e08e2"/></linearGradient><linearGradient id="g182" gradientUnits="userSpaceOnUse" x1="302.6" y1="414.3" x2="366.8" y2="556.0"><stop offset="0" stop-color="#fff"/><stop offset="1" stop-color="#3505eb"/></linearGradient><linearGradient id="g183" gradientUnits="userSpaceOnUse" x1="302.6" y1="414.3" x2="366.8" y2="556.0"><stop offset="0" stop-color="#fff"/><stop offset="1" stop-color="#2c02f5"/></linearGradient></defs><g clip-path="url(#fbc)"><path d="M302.6 414.3L192.9 634.7L192.9 634.7Z" fill="url(#g0)" stroke="url(#g0)" stroke-width="0.6"/><path d="M302.6 414.3L192.9 634.7L192.9 634.7Z" fill="url(#g1)" stroke="url(#g1)" stroke-width="0.6"/><path d="M302.6 414.3L192.9 634.7L192.8 634.7Z" fill="url(#g2)" stroke="url(#g2)" stroke-width="0.6"/><path d="M302.6 414.3L192.8 634.7L192.8 634.7Z" fill="url(#g3)" stroke="url(#g3)" stroke-width="0.6"/><path d="M302.6 414.3L192.8 634.7L192.7 634.7Z" fill="url(#g4)" stroke="url(#g4)" stroke-width="0.6"/><path d="M302.6 414.3L192.7 634.7L192.7 634.7Z" fill="url(#g5)" stroke="url(#g5)" stroke-width="0.6"/><path d="M302.6 414.3L192.7 634.7L192.6 634.7Z" fill="url(#g6)" stroke="url(#g6)" stroke-width="0.6"/><path d="M302.6 414.3L192.6 634.7L192.5 634.7Z" fill="url(#g7)" stroke="url(#g7)" stroke-width="0.6"/><path d="M302.6 414.3L192.5 634.7L192.5 634.8Z" fill="url(#g8)" stroke="url(#g8)" stroke-width="0.6"/><path d="M302.6 414.3L192.5 634.8L192.4 634.8Z" fill="url(#g9)" stroke="url(#g9)" stroke-width="0.6"/><path d="M302.6 414.3L192.4 634.8L192.3 634.8Z" fill="url(#g10)" stroke="url(#g10)" stroke-width="0.6"/><path d="M302.6 414.3L192.3 634.8L192.2 634.8Z" fill="url(#g11)" stroke="url(#g11)" stroke-width="0.6"/><path d="M302.6 414.3L192.2 634.8L192.1 634.8Z" fill="url(#g12)" stroke="url(#g12)" stroke-width="0.6"/><path d="M302.6 414.3L192.1 634.8L192.0 634.8Z" fill="url(#g13)" stroke="url(#g13)" stroke-width="0.6"/><path d="M302.6 414.3L192.0 634.8L191.9 634.8Z" fill="url(#g14)" stroke="url(#g14)" stroke-width="0.6"/><path d="M302.6 414.3L191.9 634.8L191.8 634.8Z" fill="url(#g15)" stroke="url(#g15)" stroke-width="0.6"/><path d="M302.6 414.3L191.8 634.8L191.6 634.8Z" fill="url(#g16)" stroke="url(#g16)" stroke-width="0.6"/><path d="M302.6 414.3L191.6 634.8L191.5 634.7Z" fill="url(#g17)" stroke="url(#g17)" stroke-width="0.6"/><path d="M302.6 414.3L191.5 634.7L191.3 634.7Z" fill="url(#g18)" stroke="url(#g18)" stroke-width="0.6"/><path d="M302.6 414.3L191.3 634.7L191.1 634.6Z" fill="url(#g19)" stroke="url(#g19)" stroke-width="0.6"/><path d="M302.6 414.3L191.1 634.6L190.8 634.4Z" fill="url(#g20)" stroke="url(#g20)" stroke-width="0.6"/><path d="M302.6 414.3L190.8 634.4L190.5 634.2Z" fill="url(#g21)" stroke="url(#g21)" stroke-width="0.6"/><path d="M302.6 414.3L190.5 634.2L190.1 634.0Z" fill="url(#g22)" stroke="url(#g22)" stroke-width="0.6"/><path d="M302.6 414.3L190.1 634.0L189.8 633.7Z" fill="url(#g23)" stroke="url(#g23)" stroke-width="0.6"/><path d="M302.6 414.3L189.8 633.7L189.3 633.4Z" fill="url(#g24)" stroke="url(#g24)" stroke-width="0.6"/><path d="M302.6 414.3L189.3 633.4L188.8 633.0Z" fill="url(#g25)" stroke="url(#g25)" stroke-width="0.6"/><path d="M302.6 414.3L188.8 633.0L188.3 632.5Z" fill="url(#g26)" stroke="url(#g26)" stroke-width="0.6"/><path d="M302.6 414.3L188.3 632.5L187.7 632.0Z" fill="url(#g27)" stroke="url(#g27)" stroke-width="0.6"/><path d="M302.6 414.3L187.7 632.0L187.0 631.4Z" fill="url(#g28)" stroke="url(#g28)" stroke-width="0.6"/><path d="M302.6 414.3L187.0 631.4L186.3 630.7Z" fill="url(#g29)" stroke="url(#g29)" stroke-width="0.6"/><path d="M302.6 414.3L186.3 630.7L185.4 630.0Z" fill="url(#g30)" stroke="url(#g30)" stroke-width="0.6"/><path d="M302.6 414.3L185.4 630.0L184.5 629.2Z" fill="url(#g31)" stroke="url(#g31)" stroke-width="0.6"/><path d="M302.6 414.3L184.5 629.2L183.4 628.3Z" fill="url(#g32)" stroke="url(#g32)" stroke-width="0.6"/><path d="M302.6 414.3L183.4 628.3L182.2 627.3Z" fill="url(#g33)" stroke="url(#g33)" stroke-width="0.6"/><path d="M302.6 414.3L182.2 627.3L180.9 626.1Z" fill="url(#g34)" stroke="url(#g34)" stroke-width="0.6"/><path d="M302.6 414.3L180.9 626.1L179.5 624.9Z" fill="url(#g35)" stroke="url(#g35)" stroke-width="0.6"/><path d="M302.6 414.3L179.5 624.9L177.9 623.5Z" fill="url(#g36)" stroke="url(#g36)" stroke-width="0.6"/><path d="M302.6 414.3L177.9 623.5L176.1 621.9Z" fill="url(#g37)" stroke="url(#g37)" stroke-width="0.6"/><path d="M302.6 414.3L176.1 621.9L174.2 620.1Z" fill="url(#g38)" stroke="url(#g38)" stroke-width="0.6"/><path d="M302.6 414.3L174.2 620.1L172.2 618.1Z" fill="url(#g39)" stroke="url(#g39)" stroke-width="0.6"/><path d="M302.6 414.3L172.2 618.1L170.0 615.7Z" fill="url(#g40)" stroke="url(#g40)" stroke-width="0.6"/><path d="M302.6 414.3L170.0 615.7L167.6 612.9Z" fill="url(#g41)" stroke="url(#g41)" stroke-width="0.6"/><path d="M302.6 414.3L167.6 612.9L165.0 609.3Z" fill="url(#g42)" stroke="url(#g42)" stroke-width="0.6"/><path d="M302.6 414.3L165.0 609.3L161.9 604.8Z" fill="url(#g43)" stroke="url(#g43)" stroke-width="0.6"/><path d="M302.6 414.3L161.9 604.8L158.5 599.2Z" fill="url(#g44)" stroke="url(#g44)" stroke-width="0.6"/><path d="M302.6 414.3L158.5 599.2L154.8 592.5Z" fill="url(#g45)" stroke="url(#g45)" stroke-width="0.6"/><path d="M302.6 414.3L154.8 592.5L150.7 584.4Z" fill="url(#g46)" stroke="url(#g46)" stroke-width="0.6"/><path d="M302.6 414.3L150.7 584.4L146.2 574.6Z" fill="url(#g47)" stroke="url(#g47)" stroke-width="0.6"/><path d="M302.6 414.3L146.2 574.6L141.3 562.8Z" fill="url(#g48)" stroke="url(#g48)" stroke-width="0.6"/><path d="M302.6 414.3L141.3 562.8L135.9 548.9Z" fill="url(#g49)" stroke="url(#g49)" stroke-width="0.6"/><path d="M302.6 414.3L135.9 548.9L130.0 532.7Z" fill="url(#g50)" stroke="url(#g50)" stroke-width="0.6"/><path d="M302.6 414.3L130.0 532.7L123.6 513.8Z" fill="url(#g51)" stroke="url(#g51)" stroke-width="0.6"/><path d="M302.6 414.3L123.6 513.8L117.1 492.1Z" fill="url(#g52)" stroke="url(#g52)" stroke-width="0.6"/><path d="M302.6 414.3L117.1 492.1L110.7 467.5Z" fill="url(#g53)" stroke="url(#g53)" stroke-width="0.6"/><path d="M302.6 414.3L110.7 467.5L104.3 440.0Z" fill="url(#g54)" stroke="url(#g54)" stroke-width="0.6"/><path d="M302.6 414.3L104.3 440.0L97.9 409.9Z" fill="url(#g55)" stroke="url(#g55)" stroke-width="0.6"/><path d="M302.6 414.3L97.9 409.9L91.9 377.7Z" fill="url(#g56)" stroke="url(#g56)" stroke-width="0.6"/><path d="M302.6 414.3L91.9 377.7L86.6 344.2Z" fill="url(#g57)" stroke="url(#g57)" stroke-width="0.6"/><path d="M302.6 414.3L86.6 344.2L82.1 310.4Z" fill="url(#g58)" stroke="url(#g58)" stroke-width="0.6"/><path d="M302.6 414.3L82.1 310.4L78.6 276.7Z" fill="url(#g59)" stroke="url(#g59)" stroke-width="0.6"/><path d="M302.6 414.3L78.6 276.7L76.4 244.0Z" fill="url(#g60)" stroke="url(#g60)" stroke-width="0.6"/><path d="M302.6 414.3L76.4 244.0L75.5 213.2Z" fill="url(#g61)" stroke="url(#g61)" stroke-width="0.6"/><path d="M302.6 414.3L75.5 213.2L76.2 184.4Z" fill="url(#g62)" stroke="url(#g62)" stroke-width="0.6"/><path d="M302.6 414.3L76.2 184.4L78.5 157.9Z" fill="url(#g63)" stroke="url(#g63)" stroke-width="0.6"/><path d="M302.6 414.3L78.5 157.9L82.6 134.5Z" fill="url(#g64)" stroke="url(#g64)" stroke-width="0.6"/><path d="M302.6 414.3L82.6 134.5L88.3 114.8Z" fill="url(#g65)" stroke="url(#g65)" stroke-width="0.6"/><path d="M302.6 414.3L88.3 114.8L95.6 99.2Z" fill="url(#g66)" stroke="url(#g66)" stroke-width="0.6"/><path d="M302.6 414.3L95.6 99.2L104.2 88.1Z" fill="url(#g67)" stroke="url(#g67)" stroke-width="0.6"/><path d="M302.6 414.3L104.2 88.1L113.9 81.4Z" fill="url(#g68)" stroke="url(#g68)" stroke-width="0.6"/><path d="M302.6 414.3L113.9 81.4L124.2 78.4Z" fill="url(#g69)" stroke="url(#g69)" stroke-width="0.6"/><path d="M302.6 414.3L124.2 78.4L135.0 78.8Z" fill="url(#g70)" stroke="url(#g70)" stroke-width="0.6"/><path d="M302.6 414.3L135.0 78.8L146.0 81.5Z" fill="url(#g71)" stroke="url(#g71)" stroke-width="0.6"/><path d="M302.6 414.3L146.0 81.5L157.3 85.8Z" fill="url(#g72)" stroke="url(#g72)" stroke-width="0.6"/><path d="M302.6 414.3L157.3 85.8L168.6 91.2Z" fill="url(#g73)" stroke="url(#g73)" stroke-width="0.6"/><path d="M302.6 414.3L168.6 91.2L179.6 97.2Z" fill="url(#g74)" stroke="url(#g74)" stroke-width="0.6"/><path d="M302.6 414.3L179.6 97.2L190.3 103.5Z" fill="url(#g75)" stroke="url(#g75)" stroke-width="0.6"/><path d="M302.6 414.3L190.3 103.5L200.7 110.0Z" fill="url(#g76)" stroke="url(#g76)" stroke-width="0.6"/><path d="M302.6 414.3L200.7 110.0L211.0 117.0Z" fill="url(#g77)" stroke="url(#g77)" stroke-width="0.6"/><path d="M302.6 414.3L211.0 117.0L221.1 124.2Z" fill="url(#g78)" stroke="url(#g78)" stroke-width="0.6"/><path d="M302.6 414.3L221.1 124.2L231.2 131.8Z" fill="url(#g79)" stroke="url(#g79)" stroke-width="0.6"/><path d="M302.6 414.3L231.2 131.8L241.2 139.6Z" fill="url(#g80)" stroke="url(#g80)" stroke-width="0.6"/><path d="M302.6 414.3L241.2 139.6L251.1 147.8Z" fill="url(#g81)" stroke="url(#g81)" stroke-width="0.6"/><path d="M302.6 414.3L251.1 147.8L261.0 156.1Z" fill="url(#g82)" stroke="url(#g82)" stroke-width="0.6"/><path d="M302.6 414.3L261.0 156.1L270.9 164.7Z" fill="url(#g83)" stroke="url(#g83)" stroke-width="0.6"/><path d="M302.6 414.3L270.9 164.7L280.8 173.4Z" fill="url(#g84)" stroke="url(#g84)" stroke-width="0.6"/><path d="M302.6 414.3L280.8 173.4L290.6 182.3Z" fill="url(#g85)" stroke="url(#g85)" stroke-width="0.6"/><path d="M302.6 414.3L290.6 182.3L300.5 191.3Z" fill="url(#g86)" stroke="url(#g86)" stroke-width="0.6"/><path d="M302.6 414.3L300.5 191.3L310.3 200.4Z" fill="url(#g87)" stroke="url(#g87)" stroke-width="0.6"/><path d="M302.6 414.3L310.3 200.4L320.2 209.6Z" fill="url(#g88)" stroke="url(#g88)" stroke-width="0.6"/><path d="M302.6 414.3L320.2 209.6L330.0 218.9Z" fill="url(#g89)" stroke="url(#g89)" stroke-width="0.6"/><path d="M302.6 414.3L330.0 218.9L339.9 228.3Z" fill="url(#g90)" stroke="url(#g90)" stroke-width="0.6"/><path d="M302.6 414.3L339.9 228.3L349.7 237.6Z" fill="url(#g91)" stroke="url(#g91)" stroke-width="0.6"/><path d="M302.6 414.3L349.7 237.6L359.5 247.0Z" fill="url(#g92)" stroke="url(#g92)" stroke-width="0.6"/><path d="M302.6 414.3L359.5 247.0L369.2 256.4Z" fill="url(#g93)" stroke="url(#g93)" stroke-width="0.6"/><path d="M302.6 414.3L369.2 256.4L378.9 265.7Z" fill="url(#g94)" stroke="url(#g94)" stroke-width="0.6"/><path d="M302.6 414.3L378.9 265.7L388.5 275.0Z" fill="url(#g95)" stroke="url(#g95)" stroke-width="0.6"/><path d="M302.6 414.3L388.5 275.0L398.1 284.3Z" fill="url(#g96)" stroke="url(#g96)" stroke-width="0.6"/><path d="M302.6 414.3L398.1 284.3L407.5 293.5Z" fill="url(#g97)" stroke="url(#g97)" stroke-width="0.6"/><path d="M302.6 414.3L407.5 293.5L416.9 302.5Z" fill="url(#g98)" stroke="url(#g98)" stroke-width="0.6"/><path d="M302.6 414.3L416.9 302.5L426.1 311.4Z" fill="url(#g99)" stroke="url(#g99)" stroke-width="0.6"/><path d="M302.6 414.3L426.1 311.4L435.1 320.2Z" fill="url(#g100)" stroke="url(#g100)" stroke-width="0.6"/><path d="M302.6 414.3L435.1 320.2L443.9 328.8Z" fill="url(#g101)" stroke="url(#g101)" stroke-width="0.6"/><path d="M302.6 414.3L443.9 328.8L452.6 337.2Z" fill="url(#g102)" stroke="url(#g102)" stroke-width="0.6"/><path d="M302.6 414.3L452.6 337.2L461.0 345.4Z" fill="url(#g103)" stroke="url(#g103)" stroke-width="0.6"/><path d="M302.6 414.3L461.0 345.4L469.2 353.3Z" fill="url(#g104)" stroke="url(#g104)" stroke-width="0.6"/><path d="M302.6 414.3L469.2 353.3L477.1 361.0Z" fill="url(#g105)" stroke="url(#g105)" stroke-width="0.6"/><path d="M302.6 414.3L477.1 361.0L484.7 368.4Z" fill="url(#g106)" stroke="url(#g106)" stroke-width="0.6"/><path d="M302.6 414.3L484.7 368.4L491.9 375.3Z" fill="url(#g107)" stroke="url(#g107)" stroke-width="0.6"/><path d="M302.6 414.3L491.9 375.3L498.6 381.8Z" fill="url(#g108)" stroke="url(#g108)" stroke-width="0.6"/><path d="M302.6 414.3L498.6 381.8L505.0 388.0Z" fill="url(#g109)" stroke="url(#g109)" stroke-width="0.6"/><path d="M302.6 414.3L505.0 388.0L511.1 393.9Z" fill="url(#g110)" stroke="url(#g110)" stroke-width="0.6"/><path d="M302.6 414.3L511.1 393.9L516.8 399.5Z" fill="url(#g111)" stroke="url(#g111)" stroke-width="0.6"/><path d="M302.6 414.3L516.8 399.5L522.2 404.7Z" fill="url(#g112)" stroke="url(#g112)" stroke-width="0.6"/><path d="M302.6 414.3L522.2 404.7L527.1 409.5Z" fill="url(#g113)" stroke="url(#g113)" stroke-width="0.6"/><path d="M302.6 414.3L527.1 409.5L531.6 413.8Z" fill="url(#g114)" stroke="url(#g114)" stroke-width="0.6"/><path d="M302.6 414.3L531.6 413.8L535.8 417.9Z" fill="url(#g115)" stroke="url(#g115)" stroke-width="0.6"/><path d="M302.6 414.3L535.8 417.9L539.7 421.7Z" fill="url(#g116)" stroke="url(#g116)" stroke-width="0.6"/><path d="M302.6 414.3L539.7 421.7L543.2 425.1Z" fill="url(#g117)" stroke="url(#g117)" stroke-width="0.6"/><path d="M302.6 414.3L543.2 425.1L546.4 428.2Z" fill="url(#g118)" stroke="url(#g118)" stroke-width="0.6"/><path d="M302.6 414.3L546.4 428.2L549.4 431.1Z" fill="url(#g119)" stroke="url(#g119)" stroke-width="0.6"/><path d="M302.6 414.3L549.4 431.1L552.1 433.7Z" fill="url(#g120)" stroke="url(#g120)" stroke-width="0.6"/><path d="M302.6 414.3L552.1 433.7L554.5 436.0Z" fill="url(#g121)" stroke="url(#g121)" stroke-width="0.6"/><path d="M302.6 414.3L554.5 436.0L556.7 438.2Z" fill="url(#g122)" stroke="url(#g122)" stroke-width="0.6"/><path d="M302.6 414.3L556.7 438.2L558.8 440.2Z" fill="url(#g123)" stroke="url(#g123)" stroke-width="0.6"/><path d="M302.6 414.3L558.8 440.2L560.7 442.0Z" fill="url(#g124)" stroke="url(#g124)" stroke-width="0.6"/><path d="M302.6 414.3L560.7 442.0L562.5 443.7Z" fill="url(#g125)" stroke="url(#g125)" stroke-width="0.6"/><path d="M302.6 414.3L562.5 443.7L564.1 445.4Z" fill="url(#g126)" stroke="url(#g126)" stroke-width="0.6"/><path d="M302.6 414.3L564.1 445.4L565.6 446.8Z" fill="url(#g127)" stroke="url(#g127)" stroke-width="0.6"/><path d="M302.6 414.3L565.6 446.8L567.1 448.2Z" fill="url(#g128)" stroke="url(#g128)" stroke-width="0.6"/><path d="M302.6 414.3L567.1 448.2L568.3 449.5Z" fill="url(#g129)" stroke="url(#g129)" stroke-width="0.6"/><path d="M302.6 414.3L568.3 449.5L569.5 450.6Z" fill="url(#g130)" stroke="url(#g130)" stroke-width="0.6"/><path d="M302.6 414.3L569.5 450.6L570.6 451.7Z" fill="url(#g131)" stroke="url(#g131)" stroke-width="0.6"/><path d="M302.6 414.3L570.6 451.7L571.6 452.6Z" fill="url(#g132)" stroke="url(#g132)" stroke-width="0.6"/><path d="M302.6 414.3L571.6 452.6L572.4 453.4Z" fill="url(#g133)" stroke="url(#g133)" stroke-width="0.6"/><path d="M302.6 414.3L572.4 453.4L573.1 454.1Z" fill="url(#g134)" stroke="url(#g134)" stroke-width="0.6"/><path d="M302.6 414.3L573.1 454.1L573.8 454.8Z" fill="url(#g135)" stroke="url(#g135)" stroke-width="0.6"/><path d="M302.6 414.3L573.8 454.8L574.4 455.4Z" fill="url(#g136)" stroke="url(#g136)" stroke-width="0.6"/><path d="M302.6 414.3L574.4 455.4L575.0 455.9Z" fill="url(#g137)" stroke="url(#g137)" stroke-width="0.6"/><path d="M302.6 414.3L575.0 455.9L575.5 456.4Z" fill="url(#g138)" stroke="url(#g138)" stroke-width="0.6"/><path d="M302.6 414.3L575.5 456.4L575.9 456.8Z" fill="url(#g139)" stroke="url(#g139)" stroke-width="0.6"/><path d="M302.6 414.3L575.9 456.8L576.2 457.1Z" fill="url(#g140)" stroke="url(#g140)" stroke-width="0.6"/><path d="M302.6 414.3L576.2 457.1L576.5 457.4Z" fill="url(#g141)" stroke="url(#g141)" stroke-width="0.6"/><path d="M302.6 414.3L576.5 457.4L576.8 457.7Z" fill="url(#g142)" stroke="url(#g142)" stroke-width="0.6"/><path d="M302.6 414.3L576.8 457.7L577.0 457.9Z" fill="url(#g143)" stroke="url(#g143)" stroke-width="0.6"/><path d="M302.6 414.3L577.0 457.9L577.3 458.1Z" fill="url(#g144)" stroke="url(#g144)" stroke-width="0.6"/><path d="M302.6 414.3L577.3 458.1L577.5 458.3Z" fill="url(#g145)" stroke="url(#g145)" stroke-width="0.6"/><path d="M302.6 414.3L577.5 458.3L577.7 458.5Z" fill="url(#g146)" stroke="url(#g146)" stroke-width="0.6"/><path d="M302.6 414.3L577.7 458.5L577.9 458.7Z" fill="url(#g147)" stroke="url(#g147)" stroke-width="0.6"/><path d="M302.6 414.3L577.9 458.7L578.1 458.9Z" fill="url(#g148)" stroke="url(#g148)" stroke-width="0.6"/><path d="M302.6 414.3L578.1 458.9L578.3 459.1Z" fill="url(#g149)" stroke="url(#g149)" stroke-width="0.6"/><path d="M302.6 414.3L578.3 459.1L578.4 459.3Z" fill="url(#g150)" stroke="url(#g150)" stroke-width="0.6"/><path d="M302.6 414.3L578.4 459.3L578.6 459.4Z" fill="url(#g151)" stroke="url(#g151)" stroke-width="0.6"/><path d="M302.6 414.3L578.6 459.4L578.8 459.6Z" fill="url(#g152)" stroke="url(#g152)" stroke-width="0.6"/><path d="M302.6 414.3L578.8 459.6L578.8 459.7Z" fill="url(#g153)" stroke="url(#g153)" stroke-width="0.6"/><path d="M302.6 414.3L578.8 459.7L578.9 459.7Z" fill="url(#g154)" stroke="url(#g154)" stroke-width="0.6"/><path d="M302.6 414.3L578.9 459.7L579.0 459.8Z" fill="url(#g155)" stroke="url(#g155)" stroke-width="0.6"/><path d="M302.6 414.3L579.0 459.8L579.0 459.9Z" fill="url(#g156)" stroke="url(#g156)" stroke-width="0.6"/><path d="M302.6 414.3L579.0 459.9L579.1 459.9Z" fill="url(#g157)" stroke="url(#g157)" stroke-width="0.6"/><path d="M302.6 414.3L579.1 459.9L579.1 459.9Z" fill="url(#g158)" stroke="url(#g158)" stroke-width="0.6"/><path d="M302.6 414.3L579.1 459.9L579.1 460.0Z" fill="url(#g159)" stroke="url(#g159)" stroke-width="0.6"/><path d="M302.6 414.3L579.1 460.0L563.0 467.2Z" fill="url(#g160)" stroke="url(#g160)" stroke-width="0.6"/><path d="M302.6 414.3L563.0 467.2L546.9 474.5Z" fill="url(#g161)" stroke="url(#g161)" stroke-width="0.6"/><path d="M302.6 414.3L546.9 474.5L530.9 481.8Z" fill="url(#g162)" stroke="url(#g162)" stroke-width="0.6"/><path d="M302.6 414.3L530.9 481.8L514.8 489.1Z" fill="url(#g163)" stroke="url(#g163)" stroke-width="0.6"/><path d="M302.6 414.3L514.8 489.1L498.7 496.4Z" fill="url(#g164)" stroke="url(#g164)" stroke-width="0.6"/><path d="M302.6 414.3L498.7 496.4L482.6 503.6Z" fill="url(#g165)" stroke="url(#g165)" stroke-width="0.6"/><path d="M302.6 414.3L482.6 503.6L466.5 510.9Z" fill="url(#g166)" stroke="url(#g166)" stroke-width="0.6"/><path d="M302.6 414.3L466.5 510.9L450.4 518.2Z" fill="url(#g167)" stroke="url(#g167)" stroke-width="0.6"/><path d="M302.6 414.3L450.4 518.2L434.3 525.5Z" fill="url(#g168)" stroke="url(#g168)" stroke-width="0.6"/><path d="M302.6 414.3L434.3 525.5L418.2 532.7Z" fill="url(#g169)" stroke="url(#g169)" stroke-width="0.6"/><path d="M302.6 414.3L418.2 532.7L402.1 540.0Z" fill="url(#g170)" stroke="url(#g170)" stroke-width="0.6"/><path d="M302.6 414.3L402.1 540.0L386.0 547.3Z" fill="url(#g171)" stroke="url(#g171)" stroke-width="0.6"/><path d="M302.6 414.3L386.0 547.3L369.9 554.6Z" fill="url(#g172)" stroke="url(#g172)" stroke-width="0.6"/><path d="M302.6 414.3L369.9 554.6L353.9 561.9Z" fill="url(#g173)" stroke="url(#g173)" stroke-width="0.6"/><path d="M302.6 414.3L353.9 561.9L337.8 569.1Z" fill="url(#g174)" stroke="url(#g174)" stroke-width="0.6"/><path d="M302.6 414.3L337.8 569.1L321.7 576.4Z" fill="url(#g175)" stroke="url(#g175)" stroke-width="0.6"/><path d="M302.6 414.3L321.7 576.4L305.6 583.7Z" fill="url(#g176)" stroke="url(#g176)" stroke-width="0.6"/><path d="M302.6 414.3L305.6 583.7L289.5 591.0Z" fill="url(#g177)" stroke="url(#g177)" stroke-width="0.6"/><path d="M302.6 414.3L289.5 591.0L273.4 598.3Z" fill="url(#g178)" stroke="url(#g178)" stroke-width="0.6"/><path d="M302.6 414.3L273.4 598.3L257.3 605.5Z" fill="url(#g179)" stroke="url(#g179)" stroke-width="0.6"/><path d="M302.6 414.3L257.3 605.5L241.2 612.8Z" fill="url(#g180)" stroke="url(#g180)" stroke-width="0.6"/><path d="M302.6 414.3L241.2 612.8L225.1 620.1Z" fill="url(#g181)" stroke="url(#g181)" stroke-width="0.6"/><path d="M302.6 414.3L225.1 620.1L209.0 627.4Z" fill="url(#g182)" stroke="url(#g182)" stroke-width="0.6"/><path d="M302.6 414.3L209.0 627.4L192.9 634.7Z" fill="url(#g183)" stroke="url(#g183)" stroke-width="0.6"/></g><clipPath id="fbc"><rect x="74" y="34" width="620" height="604"/></clipPath></svg>
<canvas id="cv" width="733" height="686"></canvas>
<svg width="733" height="686" viewBox="0 0 733 686">
<rect x="72" y="33" width="622" height="1" fill="#a0a0a0"/>
<rect x="72" y="33" width="1" height="606" fill="#a0a0a0"/>
<rect x="73" y="34" width="1" height="604" fill="#c4c4c4"/>
<rect x="72" y="638" width="622" height="1" fill="#b0b0b0"/>
<path d="M78 277h3v1h-3z M79 276h1v3h-1z M82 135h3v1h-3z M83 134h1v3h-1z M123 78h3v1h-3z M124 77h1v3h-1z M179 97h3v1h-3z M180 96h1v3h-1z M230 132h3v1h-3z M231 131h1v3h-1z M280 173h3v1h-3z M281 172h1v3h-1z M329 219h3v1h-3z M330 218h1v3h-1z M378 266h3v1h-3z M379 265h1v3h-1z M425 311h3v1h-3z M426 310h1v3h-1z M468 353h3v1h-3z M469 352h1v3h-1z M504 388h3v1h-3z M505 387h1v3h-1z M531 414h3v1h-3z M532 413h1v3h-1z M548 431h3v1h-3z M549 430h1v3h-1z M567 449h3v1h-3z M568 448h1v3h-1z M578 460h3v1h-3z M579 459h1v3h-1z M192 635h3v1h-3z M193 634h1v3h-1z M180 626h3v1h-3z M181 625h1v3h-1z M171 618h3v1h-3z M172 617h1v3h-1z M158 599h3v1h-3z M159 598h1v3h-1z M135 549h3v1h-3z M136 548h1v3h-1z M103 440h3v1h-3z M104 439h1v3h-1z M302 414h3v1h-3z M303 413h1v3h-1z" fill="#707070"/>
<g class="wl" clip-path="url(#pc)">
<text x="85" y="282" textLength="31" lengthAdjust="spacingAndGlyphs">500nm</text>
<text x="89" y="140" textLength="31" lengthAdjust="spacingAndGlyphs">510nm</text>
<text x="130" y="83" textLength="31" lengthAdjust="spacingAndGlyphs">520nm</text>
<text x="186" y="102" textLength="31" lengthAdjust="spacingAndGlyphs">530nm</text>
<text x="237" y="137" textLength="31" lengthAdjust="spacingAndGlyphs">540nm</text>
<text x="287" y="178" textLength="31" lengthAdjust="spacingAndGlyphs">550nm</text>
<text x="336" y="224" textLength="31" lengthAdjust="spacingAndGlyphs">560nm</text>
<text x="385" y="271" textLength="31" lengthAdjust="spacingAndGlyphs">570nm</text>
<text x="432" y="316" textLength="31" lengthAdjust="spacingAndGlyphs">580nm</text>
<text x="475" y="358" textLength="31" lengthAdjust="spacingAndGlyphs">590nm</text>
<text x="511" y="393" textLength="31" lengthAdjust="spacingAndGlyphs">600nm</text>
<text x="538" y="419" textLength="31" lengthAdjust="spacingAndGlyphs">610nm</text>
<text x="555" y="436" textLength="31" lengthAdjust="spacingAndGlyphs">620nm</text>
<text x="574" y="454" textLength="31" lengthAdjust="spacingAndGlyphs">640nm</text>
<text x="585" y="465" textLength="31" lengthAdjust="spacingAndGlyphs">780nm</text>
<text x="154" y="640" textLength="31" lengthAdjust="spacingAndGlyphs">380nm</text>
<text x="142" y="631" textLength="31" lengthAdjust="spacingAndGlyphs">450nm</text>
<text x="133" y="623" textLength="31" lengthAdjust="spacingAndGlyphs">460nm</text>
<text x="120" y="604" textLength="31" lengthAdjust="spacingAndGlyphs">470nm</text>
<text x="97" y="554" textLength="31" lengthAdjust="spacingAndGlyphs">480nm</text>
<text x="65" y="445" textLength="31" lengthAdjust="spacingAndGlyphs">490nm</text>
<text x="309" y="419" textLength="75" lengthAdjust="spacingAndGlyphs">CIE White Point</text>
</g>
<path d="M142.5 34V638 M211.5 34V638 M280.5 34V638 M349.5 34V638 M417.5 34V638 M486.5 34V638 M555.5 34V638 M624.5 34V638 M73 604.5H694 M73 571.5H694 M73 537.5H694 M73 504.5H694 M73 470.5H694 M73 437.5H694 M73 403.5H694 M73 370.5H694 M73 336.5H694 M73 302.5H694 M73 269.5H694 M73 235.5H694 M73 202.5H694 M73 168.5H694 M73 135.5H694 M73 101.5H694 M73 68.5H694" stroke="#a0a000" stroke-width="1" fill="none" shape-rendering="crispEdges"/>
<rect x="383" y="34" width="1" height="604" fill="#ff0000"/>
<rect x="74" y="367" width="620" height="1" fill="#ff0000"/>
<path d="M243.3 473.8 L245.8 470.3 L248.5 466.6 L251.5 462.7 L254.7 458.6 L258.1 454.3 L261.7 449.9 L265.6 445.4 L269.6 440.8 L273.8 436.2 L278.2 431.6 L282.7 427.0 L287.3 422.4 L292.1 417.9 L296.9 413.6 L301.8 409.3 L306.8 405.2 L311.8 401.2 L316.9 397.4 L322.0 393.7 L327.1 390.3 L332.2 387.0 L337.2 383.9 L342.3 381.0 L347.2 378.3 L352.2 375.8 L357.1 373.5 L361.9 371.4 L366.7 369.5 L371.4 367.7 L376.0 366.2 L380.5 364.8 L384.9 363.6 L389.3 362.6 L393.5 361.7 L397.7 360.9 L401.7 360.4 L405.7 359.9 L409.6 359.6 L413.4 359.4 L417.0 359.3 L420.6 359.3 L424.1 359.5 L427.5 359.7 L430.9 360.0 L434.1 360.4 L437.2 360.9 L440.3 361.4 L443.2 362.0 L446.1 362.7 L449.0 363.4 L451.7 364.1 L454.4 364.9 L457.0 365.8 L459.5 366.7 L461.9 367.6 L464.3 368.5 L466.7 369.5 L468.9 370.5 L471.1 371.5 L473.3 372.6 L475.4 373.6 L477.4 374.7 L479.4 375.7 L481.4 376.8 L483.3 377.9 L485.1 379.0 L486.9 380.1 L488.7 381.2 L490.4 382.3 L492.1 383.3 L493.7 384.4 L495.3 385.5 L496.9 386.6 L498.4 387.7 L499.9 388.7 L501.4 389.8 L502.8 390.8 L504.3 391.9 L505.6 392.9 L507.0 394.0 L508.3 395.0 L509.6 396.0 L510.8 397.0 L512.1 398.0 L513.3 399.0 L514.5 399.9 L515.6 400.9 L516.8 401.8 L517.9 402.8 L519.0 403.7 L520.1 404.6 L521.1 405.5 L522.1 406.4 L523.2 407.2 L524.2 408.1 L525.1 409.0 L526.1 409.8 L527.0 410.6 L528.0 411.5 L528.9 412.3 L529.8 413.1 L530.6 413.8 L531.5 414.6 L532.3 415.4 L533.2 416.1 L534.0 416.9 L534.8 417.6 L535.5 418.3 L536.3 419.0 L537.1 419.7 L537.8 420.4 L538.5 421.1 L539.3 421.7 L540.0 422.4 L540.7 423.0 L541.3 423.7 L542.0 424.3 L542.7 424.9 L543.3 425.5" stroke="#787878" stroke-width="1" fill="none" shape-rendering="crispEdges"/>
<path d="M280.5 408.5 L376.5 348.5 L417.5 343.5 L417.5 382.5 L376.5 382.5 L280.5 453.5 Z M376.5 348.5 L376.5 382.5" stroke="#000" stroke-width="1" fill="none" shape-rendering="crispEdges"/>
<g fill="#000"><rect x="279" y="407" width="3" height="3"/><rect x="375" y="347" width="3" height="3"/><rect x="416" y="342" width="3" height="3"/><rect x="416" y="381" width="3" height="3"/><rect x="375" y="381" width="3" height="3"/><rect x="279" y="452" width="3" height="3"/></g>
<circle cx="383.5" cy="367.5" r="2.6" fill="#ff0000"/>
<filter id="crisp" x="0" y="0" width="733" height="686" filterUnits="userSpaceOnUse"><feComponentTransfer><feFuncA type="discrete" tableValues="0 0 0 1 1"/></feComponentTransfer></filter>
<clipPath id="pc"><rect x="74" y="34" width="620" height="604"/></clipPath>
<g class="ax">
<text x="63.5" y="642" text-anchor="end">0.0000</text>
<text x="71.8" y="656" text-anchor="middle">0.0000</text>
<text x="63.5" y="575" text-anchor="end">0.1000</text>
<text x="140.8" y="656" text-anchor="middle">0.1000</text>
<text x="63.5" y="508" text-anchor="end">0.2000</text>
<text x="209.8" y="656" text-anchor="middle">0.2000</text>
<text x="63.5" y="441" text-anchor="end">0.3000</text>
<text x="278.8" y="656" text-anchor="middle">0.3000</text>
<text x="63.5" y="374" text-anchor="end">0.4000</text>
<text x="347.8" y="656" text-anchor="middle">0.4000</text>
<text x="63.5" y="306" text-anchor="end">0.5000</text>
<text x="415.8" y="656" text-anchor="middle">0.5000</text>
<text x="63.5" y="239" text-anchor="end">0.6000</text>
<text x="484.8" y="656" text-anchor="middle">0.6000</text>
<text x="63.5" y="172" text-anchor="end">0.7000</text>
<text x="553.8" y="656" text-anchor="middle">0.7000</text>
<text x="63.5" y="105" text-anchor="end">0.8000</text>
<text x="622.8" y="656" text-anchor="middle">0.8000</text>
<text x="63.5" y="38" text-anchor="end">0.9000</text>
<text x="691.8" y="656" text-anchor="middle">0.9000</text>
</g>
<path d="M66 638h5v1h-5z M73 640h1v5h-1z M66 571h5v1h-5z M142 640h1v5h-1z M66 504h5v1h-5z M211 640h1v5h-1z M66 437h5v1h-5z M280 640h1v5h-1z M66 370h5v1h-5z M349 640h1v5h-1z M66 302h5v1h-5z M417 640h1v5h-1z M66 235h5v1h-5z M486 640h1v5h-1z M66 168h5v1h-5z M555 640h1v5h-1z M66 101h5v1h-5z M624 640h1v5h-1z M66 34h5v1h-5z M693 640h1v5h-1z" fill="#000"/>
<text x="383.5" y="675" text-anchor="middle" style="font-size:11px">x</text>
<text transform="translate(23 338) rotate(-90)" text-anchor="middle" style="font-size:11px">y</text>
</svg>
<script>
(function(){
var V=[[0.1741,0.005,40.0,0.0,250.0],[0.1741,0.005,40.0,0.0,250.0],[0.1741,0.005,40.0,0.0,250.0],[0.1741,0.005,40.0,0.0,250.0],[0.174,0.005,40.0,0.0,250.0],[0.174,0.005,40.0,0.0,250.0],[0.174,0.005,40.0,0.0,250.0],[0.1739,0.0049,40.0,0.0,250.0],[0.1739,0.0049,40.0,0.0,250.0],[0.1738,0.0049,40.0,0.0,250.0],[0.1738,0.0049,40.0,0.0,250.0],[0.1738,0.0049,40.0,0.0,250.0],[0.1737,0.0049,40.0,0.0,250.0],[0.1737,0.0049,40.0,0.0,250.0],[0.1736,0.0049,40.0,0.0,250.0],[0.1736,0.0049,40.0,0.0,250.0],[0.1735,0.0049,40.0,0.0,250.0],[0.1735,0.0049,40.0,0.0,250.0],[0.1734,0.0048,40.0,0.0,250.0],[0.1734,0.0048,40.0,0.0,250.0],[0.1733,0.0048,40.0,0.0,250.0],[0.1733,0.0048,40.0,0.0,250.0],[0.1732,0.0048,40.0,0.0,250.0],[0.1732,0.0048,40.0,0.0,250.0],[0.1731,0.0048,40.0,0.0,250.0],[0.173,0.0048,40.0,0.0,250.0],[0.1729,0.0048,40.0,0.0,250.0],[0.1728,0.0048,40.0,0.0,250.0],[0.1728,0.0048,40.0,0.0,250.0],[0.1727,0.0048,40.0,0.0,250.0],[0.1726,0.0048,40.0,0.0,250.0],[0.1725,0.0048,40.0,0.0,250.0],[0.1724,0.0048,40.0,0.0,250.0],[0.1723,0.0048,40.0,0.0,250.0],[0.1722,0.0048,40.0,0.0,250.0],[0.1721,0.0048,40.0,0.0,250.0],[0.172,0.0049,40.0,0.0,250.0],[0.1719,0.0049,40.0,0.0,250.0],[0.1717,0.0049,40.0,0.0,250.0],[0.1716,0.005,40.0,0.0,250.0],[0.1714,0.0051,40.0,0.0,250.0],[0.1712,0.0052,40.0,0.0,250.0],[0.171,0.0053,40.0,0.0,250.0],[0.1708,0.0055,40.0,0.0,250.0],[0.1705,0.0056,40.0,0.0,250.0],[0.1703,0.0058,40.0,0.0,250.0],[0.1701,0.006,40.0,0.0,250.0],[0.1698,0.0062,40.0,0.0,250.0],[0.1695,0.0064,40.0,0.0,250.0],[0.1692,0.0066,40.0,0.0,250.0],[0.1689,0.0069,40.0,0.0,250.0],[0.1685,0.0072,40.0,0.0,250.0],[0.1681,0.0075,40.0,0.0,250.0],[0.1677,0.0078,40.0,0.0,250.0],[0.1673,0.0082,40.0,0.0,250.0],[0.1669,0.0086,40.0,0.0,250.0],[0.1664,0.009,40.0,0.0,250.0],[0.166,0.0094,40.0,0.0,250.0],[0.1655,0.0099,40.0,0.0,250.0],[0.165,0.0104,40.0,0.0,250.0],[0.1644,0.0109,40.0,0.0,250.0],[0.1638,0.0114,40.0,0.2,250.0],[0.1632,0.0119,40.0,0.4,250.0],[0.1626,0.0125,40.0,0.6,250.0],[0.1619,0.0131,40.0,0.8,250.0],[0.1611,0.0138,40.0,1.0,250.0],[0.1603,0.0145,40.0,1.2,250.0],[0.1595,0.0152,40.0,1.4,250.0],[0.1586,0.016,40.0,1.6,250.0],[0.1576,0.0168,40.0,1.8,250.0],[0.1566,0.0177,40.0,2.0,250.0],[0.1556,0.0186,40.0,2.2,250.0],[0.1545,0.0196,40.0,2.4,250.0],[0.1534,0.0206,40.0,2.6,250.0],[0.1522,0.0216,40.0,2.8,250.0],[0.151,0.0227,40.0,3.0,250.0],[0.1497,0.024,40.0,3.2,250.0],[0.1483,0.0252,40.0,3.4,250.0],[0.1469,0.0266,40.0,3.6,250.0],[0.1455,0.0281,40.0,3.8,250.0],[0.144,0.0297,40.0,4.0,250.0],[0.1424,0.0314,39.6,5.0,250.0],[0.1408,0.0332,39.2,6.0,250.0],[0.1391,0.0352,38.8,7.0,250.0],[0.1374,0.0374,38.4,8.0,250.0],[0.1355,0.0399,38.0,9.0,250.0],[0.1335,0.0427,37.6,10.0,250.0],[0.1314,0.0459,37.2,11.0,250.0],[0.1291,0.0494,36.8,12.0,250.0],[0.1267,0.0534,36.4,13.0,250.0],[0.1241,0.0578,36.0,14.0,250.0],[0.1215,0.0626,34.8,16.6,250.0],[0.1187,0.0678,33.6,19.2,250.0],[0.1158,0.0736,32.4,21.8,250.0],[0.1128,0.0799,31.2,24.4,250.0],[0.1096,0.0868,30.0,27.0,250.0],[0.1063,0.0945,28.8,29.6,250.0],[0.1028,0.1029,27.6,32.2,250.0],[0.0991,0.112,26.4,34.8,250.0],[0.0953,0.1219,25.2,37.4,250.0],[0.0913,0.1327,24.0,40.0,250.0],[0.0871,0.1443,23.2,44.8,246.4],[0.0827,0.1569,22.4,49.6,242.8],[0.0781,0.1704,21.6,54.4,239.2],[0.0734,0.185,20.8,59.2,235.6],[0.0687,0.2007,20.0,64.0,232.0],[0.064,0.2175,19.2,70.4,227.6],[0.0593,0.2353,18.4,76.8,223.2],[0.0547,0.2541,17.6,83.2,218.8],[0.05,0.274,16.8,89.6,214.4],[0.0454,0.295,16.0,96.0,210.0],[0.0408,0.317,16.0,102.4,203.2],[0.0362,0.3399,16.0,108.8,196.4],[0.0318,0.3636,16.0,115.2,189.6],[0.0275,0.3879,16.0,121.6,182.8],[0.0235,0.4127,16.0,128.0,176.0],[0.0197,0.4378,16.0,134.4,168.0],[0.0163,0.463,16.0,140.8,160.0],[0.0132,0.4882,16.0,147.2,152.0],[0.0105,0.5134,16.0,153.6,144.0],[0.0082,0.5384,16.0,160.0,136.0],[0.0063,0.5631,16.0,169.6,128.0],[0.0049,0.5871,16.0,179.2,120.0],[0.004,0.6104,16.0,188.8,112.0],[0.0036,0.633,16.0,198.4,104.0],[0.0039,0.6548,16.0,208.0,96.0],[0.0046,0.6759,16.0,214.4,89.6],[0.006,0.6961,16.0,220.8,83.2],[0.008,0.7153,16.0,227.2,76.8],[0.0106,0.7334,16.0,233.6,70.4],[0.0139,0.7502,16.0,240.0,64.0],[0.0178,0.7656,16.0,241.5,60.8],[0.0222,0.7796,16.0,243.0,57.6],[0.0273,0.7921,16.0,244.5,54.4],[0.0328,0.8029,16.0,246.0,51.2],[0.0389,0.812,16.0,247.5,48.0],[0.0453,0.8194,16.0,249.0,44.8],[0.0522,0.8252,16.0,250.5,41.6],[0.0593,0.8294,16.0,252.0,38.4],[0.0667,0.8323,16.0,253.5,35.2],[0.0743,0.8338,16.0,255.0,32.0],[0.0821,0.8341,19.2,254.5,30.4],[0.0899,0.8333,22.4,254.0,28.8],[0.0979,0.8316,25.6,253.5,27.2],[0.106,0.8292,28.8,253.0,25.6],[0.1142,0.8262,32.0,252.5,24.0],[0.1223,0.8228,35.2,252.0,22.4],[0.1305,0.8189,38.4,251.5,20.8],[0.1387,0.8148,41.6,251.0,19.2],[0.1468,0.8104,44.8,250.5,17.6],[0.1547,0.8059,48.0,250.0,16.0],[0.1625,0.8012,51.2,248.0,16.0],[0.1702,0.7965,54.4,246.0,16.0],[0.1778,0.7917,57.6,244.0,16.0],[0.1854,0.7867,60.8,242.0,16.0],[0.1929,0.7816,64.0,240.0,16.0],[0.2003,0.7764,67.2,238.0,16.0],[0.2077,0.7711,70.4,236.0,16.0],[0.215,0.7656,73.6,234.0,16.0],[0.2223,0.76,76.8,232.0,16.0],[0.2296,0.7543,80.0,230.0,16.0],[0.2369,0.7485,82.4,228.5,16.0],[0.2441,0.7426,84.8,227.0,16.0],[0.2514,0.7366,87.2,225.5,16.0],[0.2586,0.7305,89.6,224.0,16.0],[0.2658,0.7243,92.0,222.5,16.0],[0.273,0.7181,94.4,221.0,16.0],[0.2801,0.7117,96.8,219.5,16.0],[0.2873,0.7053,99.2,218.0,16.0],[0.2945,0.6988,101.6,216.5,16.0],[0.3016,0.6923,104.0,215.0,16.0],[0.3088,0.6857,106.4,213.5,16.0],[0.3159,0.6791,108.8,212.0,16.0],[0.3231,0.6724,111.2,210.5,16.0],[0.3302,0.6656,113.6,209.0,16.0],[0.3374,0.6588,116.0,207.5,16.0],[0.3445,0.652,118.4,206.0,16.0],[0.3517,0.6452,120.8,204.5,16.0],[0.3588,0.6383,123.2,203.0,16.0],[0.366,0.6314,125.6,201.5,16.0],[0.3731,0.6245,128.0,200.0,16.0],[0.3802,0.6175,131.2,197.0,16.0],[0.3874,0.6105,134.4,194.0,16.0],[0.3945,0.6036,137.6,191.0,16.0],[0.4016,0.5966,140.8,188.0,16.0],[0.4087,0.5896,144.0,185.0,16.0],[0.4158,0.5826,147.2,182.0,16.0],[0.4229,0.5756,150.4,179.0,16.0],[0.43,0.5686,153.6,176.0,16.0],[0.437,0.5617,156.8,173.0,16.0],[0.4441,0.5547,160.0,170.0,16.0],[0.4511,0.5478,162.2,168.5,16.0],[0.458,0.5408,164.4,167.0,16.0],[0.465,0.5339,166.6,165.5,16.0],[0.4719,0.5271,168.8,164.0,16.0],[0.4788,0.5202,171.0,162.5,16.0],[0.4856,0.5134,173.2,161.0,16.0],[0.4924,0.5066,175.4,159.5,16.0],[0.4992,0.4999,177.6,158.0,16.0],[0.5058,0.4932,179.8,156.5,16.0],[0.5125,0.4866,182.0,155.0,16.0],[0.5191,0.48,183.8,153.5,16.0],[0.5256,0.4735,185.6,152.0,16.0],[0.5321,0.4671,187.4,150.5,16.0],[0.5385,0.4607,189.2,149.0,16.0],[0.5448,0.4544,191.0,147.5,16.0],[0.551,0.4482,192.8,146.0,16.0],[0.5572,0.4421,194.6,144.5,16.0],[0.5633,0.4361,196.4,143.0,16.0],[0.5693,0.4301,198.2,141.5,16.0],[0.5752,0.4242,200.0,140.0,16.0],[0.581,0.4184,202.0,138.0,16.0],[0.5867,0.4128,204.0,136.0,16.0],[0.5922,0.4072,206.0,134.0,16.0],[0.5977,0.4018,208.0,132.0,16.0],[0.6029,0.3965,210.0,130.0,16.0],[0.608,0.3914,212.0,128.0,16.0],[0.613,0.3865,214.0,126.0,16.0],[0.6178,0.3817,216.0,124.0,16.0],[0.6225,0.377,218.0,122.0,16.0],[0.627,0.3725,220.0,120.0,16.0],[0.6315,0.368,221.2,118.6,16.0],[0.6359,0.3637,222.4,117.2,16.0],[0.6402,0.3594,223.6,115.8,16.0],[0.6443,0.3553,224.8,114.4,16.0],[0.6482,0.3514,226.0,113.0,16.0],[0.652,0.3476,227.2,111.6,16.0],[0.6557,0.344,228.4,110.2,16.0],[0.6592,0.3406,229.6,108.8,16.0],[0.6625,0.3372,230.8,107.4,16.0],[0.6658,0.334,232.0,106.0,16.0],[0.6689,0.3309,232.8,105.0,16.0],[0.6719,0.3279,233.6,104.0,16.0],[0.6747,0.3251,234.4,103.0,16.0],[0.6775,0.3224,235.2,102.0,16.0],[0.6801,0.3197,236.0,101.0,16.0],[0.6826,0.3172,236.8,100.0,16.0],[0.685,0.3149,237.6,99.0,16.0],[0.6873,0.3126,238.4,98.0,16.0],[0.6894,0.3104,239.2,97.0,16.0],[0.6915,0.3083,240.0,96.0,16.0],[0.6935,0.3064,240.5,95.5,16.0],[0.6954,0.3045,241.0,94.9,16.0],[0.6972,0.3027,241.5,94.3,16.0],[0.6989,0.301,242.0,93.8,16.0],[0.7006,0.2993,242.5,93.2,16.0],[0.7022,0.2977,243.0,92.7,16.0],[0.7037,0.2962,243.5,92.2,16.0],[0.7052,0.2948,244.0,91.6,16.0],[0.7066,0.2934,244.5,91.0,16.0],[0.7079,0.292,245.0,90.5,16.0],[0.7092,0.2907,245.5,90.0,16.0],[0.7105,0.2895,246.0,89.4,16.0],[0.7117,0.2882,246.5,88.8,16.0],[0.7129,0.2871,247.0,88.3,16.0],[0.714,0.2859,247.5,87.8,16.0],[0.7151,0.2848,248.0,87.2,16.0],[0.7162,0.2838,248.5,86.7,16.0],[0.7172,0.2828,249.0,86.1,16.0],[0.7181,0.2819,249.5,85.5,16.0],[0.719,0.2809,250.0,85.0,16.0],[0.7199,0.2801,250.1,84.9,16.0],[0.7208,0.2792,250.2,84.8,16.0],[0.7216,0.2784,250.2,84.8,16.0],[0.7223,0.2777,250.3,84.7,16.0],[0.723,0.2769,250.4,84.6,16.0],[0.7237,0.2763,250.5,84.5,16.0],[0.7243,0.2757,250.6,84.4,16.0],[0.7249,0.2751,250.7,84.3,16.0],[0.7255,0.2745,250.8,84.2,16.0],[0.726,0.274,250.8,84.2,16.0],[0.7265,0.2735,250.9,84.1,16.0],[0.727,0.273,251.0,84.0,16.0],[0.7274,0.2726,251.1,83.9,16.0],[0.7279,0.2721,251.2,83.8,16.0],[0.7283,0.2717,251.2,83.8,16.0],[0.7287,0.2713,251.3,83.7,16.0],[0.729,0.271,251.4,83.6,16.0],[0.7294,0.2706,251.5,83.5,16.0],[0.7297,0.2703,251.6,83.4,16.0],[0.73,0.27,251.7,83.3,16.0],[0.7302,0.2698,251.8,83.2,16.0],[0.7305,0.2695,251.8,83.2,16.0],[0.7307,0.2693,251.9,83.1,16.0],[0.7309,0.2691,252.0,83.0,16.0],[0.7311,0.2689,252.1,82.9,16.0],[0.7313,0.2687,252.2,82.8,16.0],[0.7315,0.2685,252.2,82.8,16.0],[0.7316,0.2684,252.3,82.7,16.0],[0.7318,0.2682,252.4,82.6,16.0],[0.732,0.268,252.5,82.5,16.0],[0.7322,0.2678,252.6,82.4,16.0],[0.7323,0.2677,252.7,82.3,16.0],[0.7324,0.2676,252.8,82.2,16.0],[0.7326,0.2674,252.8,82.2,16.0],[0.7327,0.2673,252.9,82.1,16.0],[0.7329,0.2671,253.0,82.0,16.0],[0.733,0.267,253.1,81.9,16.0],[0.7331,0.2669,253.2,81.8,16.0],[0.7333,0.2667,253.2,81.8,16.0],[0.7334,0.2666,253.3,81.7,16.0],[0.7336,0.2664,253.4,81.6,16.0],[0.7337,0.2663,253.5,81.5,16.0],[0.7338,0.2662,253.6,81.4,16.0],[0.7339,0.2661,253.7,81.3,16.0],[0.734,0.266,253.8,81.2,16.0],[0.7341,0.2659,253.8,81.2,16.0],[0.7342,0.2658,253.9,81.1,16.0],[0.7343,0.2657,254.0,81.0,16.0],[0.7343,0.2657,254.1,80.9,16.0],[0.7344,0.2656,254.2,80.8,16.0],[0.7344,0.2656,254.2,80.8,16.0],[0.7345,0.2655,254.3,80.7,16.0],[0.7345,0.2655,254.4,80.6,16.0],[0.7346,0.2654,254.5,80.5,16.0],[0.7346,0.2654,254.6,80.4,16.0],[0.7346,0.2654,254.7,80.3,16.0],[0.7346,0.2654,254.8,80.2,16.0],[0.7347,0.2653,254.8,80.2,16.0],[0.7347,0.2653,254.9,80.1,16.0],[0.7347,0.2653,255.0,80.0,16.0]];
var cv=document.getElementById('cv');var ctx=cv.getContext('2d');
var W=733,H=686;var img=ctx.createImageData(W,H);var d=img.data;
var wx=1/3,wy=1/3,EXP=1.2;
// build boundary with purple line closing
var n=V.length;var ang=[];
for(var i=0;i<n;i++){ang.push(Math.atan2(V[i][1]-wy,V[i][0]-wx));}
// vertices ordered by wavelength 380..700; closing edge from 700 back to 380
function edgeHit(px,py){
  var dx=px-wx,dy=py-wy;
  for(var i=0;i<n;i++){
    var a=V[i],b=V[(i+1)%n];
    var ex=b[0]-a[0],ey=b[1]-a[1];
    var den=dx*ey-dy*ex; if(den===0)continue;
    var t=((a[0]-wx)*ey-(a[1]-wy)*ex)/den;
    var s=((a[0]-wx)*dy-(a[1]-wy)*dx)/den;
    if(t>0&&s>=0&&s<=1){return [t,a[2]+(b[2]-a[2])*s,a[3]+(b[3]-a[3])*s,a[4]+(b[4]-a[4])*s];}
  }
  return null;
}
for(var py=34;py<638;py++){
  var vy=(638-(py+0.5))/671.1;
  for(var px=74;px<694;px++){
    var vx=(px+0.5-73)/688.9;
    var h=edgeHit(vx,vy); if(!h)continue;
    var t=1/h[0];
    if(t>1){var h2=edgeHit(vx,vy+EXP/671.1); if(!h2||1/h2[0]>1)continue; t=1;}
    var k=(py*W+px)*4;
    d[k]=255+(h[1]-255)*t; d[k+1]=255+(h[2]-255)*t; d[k+2]=255+(h[3]-255)*t; d[k+3]=255;
  }
}
ctx.putImageData(img,0,0);var fbe=document.getElementById("fb");if(fbe)fbe.style.display="none";
})();
</script>
</body></html>
